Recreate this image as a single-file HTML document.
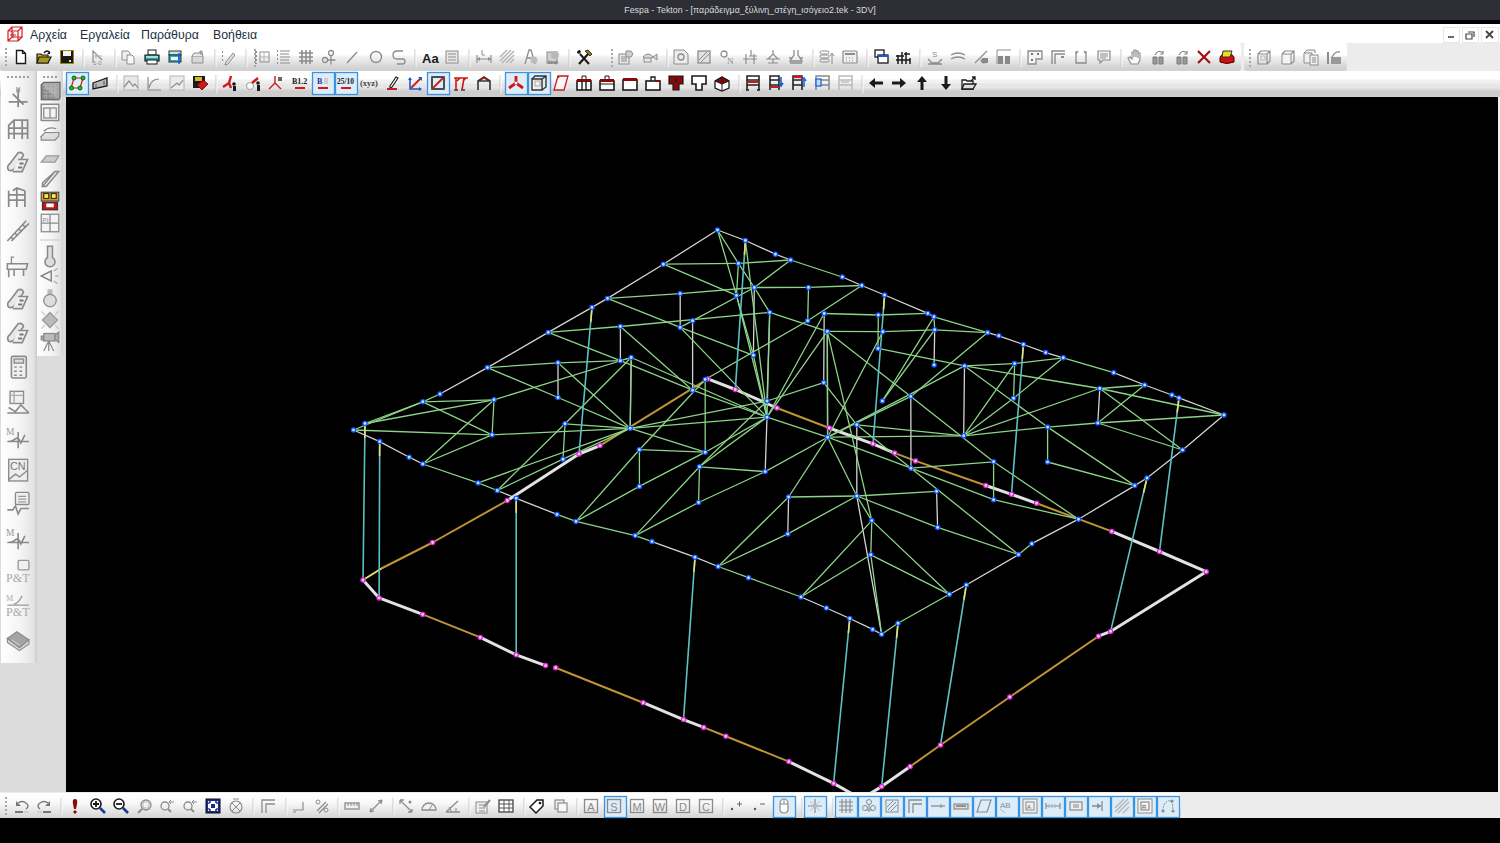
<!DOCTYPE html>
<html><head><meta charset="utf-8">
<style>
*{margin:0;padding:0;box-sizing:border-box}
html,body{width:1500px;height:843px;overflow:hidden;background:#000;font-family:"Liberation Sans",sans-serif}
.abs{position:absolute}
#title{left:0;top:0;width:1500px;height:20px;background:#2d2e36;color:#dcdcdc;font-size:8.75px;text-align:center;line-height:20px;letter-spacing:0.05px}
#blk{left:0;top:20px;width:1500px;height:4px;background:#000}
#menu{left:0;top:24px;width:1500px;height:19px;background:#fff}
#menu span{position:absolute;top:3.5px;font-size:12.3px;color:#22303e}
#r1bg{left:0;top:43px;width:1500px;height:28px;background:#ececec}
.grp{position:absolute;top:43px;height:28px;background:linear-gradient(#ffffff 0px,#ffffff 12px,#f4f4f4 13px,#eaeaea 17px,#dedede 21px,#d2d2d2 25px,#d0d0d0 28px);border-radius:3px}
#r2{left:0;top:71px;width:1500px;height:26px;background:linear-gradient(#ffffff 0px,#ffffff 8px,#f2f2f2 9px,#f0f0f0 12px,#e6e6e6 13px,#e6e6e6 17px,#dcdcdc 18px,#d8d8d8 19px,#cdcdcd 20px,#cdcdcd 25px,#d6d6d6 26px)}
#left{left:0;top:97px;width:66px;height:696px;background:#dcdcdc}
#col1{left:1px;top:71px;width:36px;height:592px;background:linear-gradient(90deg,#ffffff 0%,#f4f4f4 55%,#e2e2e2 92%,#c8c8c8 100%)}
#col2{left:37px;top:71px;width:26px;height:285px;background:linear-gradient(90deg,#ffffff 0%,#f4f4f4 55%,#e2e2e2 90%,#d0d0d0 100%)}
#canvas{left:66px;top:97px;width:1432px;height:696px;background:#000}
#rstrip{left:1498px;top:97px;width:2px;height:696px;background:#f0f0f0}
#botbg{left:0;top:792px;width:1500px;height:26px;background:#ececec}
#bot{left:0;top:793px;width:1181px;height:25px;background:linear-gradient(#ffffff 0%,#f8f8f8 40%,#e4e4e4 75%,#d4d4d4 100%);border-radius:0 4px 4px 0}
#botblk{left:0;top:818px;width:1500px;height:25px;background:#000}
</style></head><body>
<div id="title" class="abs">Fespa - Tekton - [παράδειγμα_ξύλινη_στέγη_ισόγειο2.tek - 3DV]</div>
<div id="blk" class="abs"></div>
<div id="menu" class="abs">
<span style="left:30px">Αρχεία</span>
<span style="left:80px">Εργαλεία</span>
<span style="left:141px">Παράθυρα</span>
<span style="left:213px">Βοήθεια</span>
</div>
<div id="r1bg" class="abs"></div>
<div class="grp" style="left:0;width:1241px"></div>
<div class="grp" style="left:1244px;width:103px"></div>
<div id="r2" class="abs"></div>
<div id="left" class="abs"></div>
<div id="col1" class="abs"></div>
<div id="col2" class="abs"></div>
<div id="canvas" class="abs"></div>
<div id="rstrip" class="abs"></div>
<svg class="abs" style="left:0;top:0" width="1500" height="843" viewBox="0 0 1500 843"><defs><clipPath id="cv"><rect x="66" y="97" width="1432" height="696"/></clipPath></defs><g clip-path="url(#cv)" stroke-linecap="round"><line x1="353.5" y1="430" x2="422.8" y2="401.8" stroke="#8cd488" stroke-width="1.3"/><line x1="365" y1="423.5" x2="422.8" y2="401.8" stroke="#8cd488" stroke-width="1.3"/><line x1="422.8" y1="401.8" x2="440" y2="394" stroke="#8cd488" stroke-width="1.3"/><line x1="440" y1="394" x2="487.4" y2="367.6" stroke="#d4d4d4" stroke-width="1.3"/><line x1="487.4" y1="367.6" x2="548.2" y2="332.4" stroke="#d4d4d4" stroke-width="1.3"/><line x1="548.2" y1="332.4" x2="592" y2="307.4" stroke="#d4d4d4" stroke-width="1.3"/><line x1="592" y1="307.4" x2="607.5" y2="298.4" stroke="#d4d4d4" stroke-width="1.3"/><line x1="607.5" y1="298.4" x2="663.4" y2="264.2" stroke="#d4d4d4" stroke-width="1.3"/><line x1="663.4" y1="264.2" x2="717.5" y2="230" stroke="#d4d4d4" stroke-width="1.3"/><line x1="717.5" y1="230" x2="745.4" y2="240.5" stroke="#d4d4d4" stroke-width="1.3"/><line x1="745.4" y1="240.5" x2="775.4" y2="254.2" stroke="#d4d4d4" stroke-width="1.3"/><line x1="775.4" y1="254.2" x2="790.6" y2="260" stroke="#d4d4d4" stroke-width="1.3"/><line x1="790.6" y1="260" x2="842.3" y2="277" stroke="#8cd488" stroke-width="1.3"/><line x1="842.3" y1="277" x2="861.8" y2="285.5" stroke="#d4d4d4" stroke-width="1.3"/><line x1="861.8" y1="285.5" x2="884.6" y2="295" stroke="#d4d4d4" stroke-width="1.3"/><line x1="884.6" y1="295" x2="927.8" y2="313.4" stroke="#d4d4d4" stroke-width="1.3"/><line x1="934" y1="316.8" x2="987.6" y2="332.6" stroke="#8cd488" stroke-width="1.3"/><line x1="927.8" y1="313.4" x2="934" y2="316.8" stroke="#d4d4d4" stroke-width="1.3"/><line x1="987.6" y1="332.6" x2="998.8" y2="335.8" stroke="#d4d4d4" stroke-width="1.3"/><line x1="998.8" y1="335.8" x2="1023.4" y2="344.5" stroke="#d4d4d4" stroke-width="1.3"/><line x1="1023.4" y1="344.5" x2="1045.7" y2="352.6" stroke="#d4d4d4" stroke-width="1.3"/><line x1="1045.7" y1="352.6" x2="1063.3" y2="357.8" stroke="#d4d4d4" stroke-width="1.3"/><line x1="1063.3" y1="357.8" x2="1113.7" y2="372.7" stroke="#8cd488" stroke-width="1.3"/><line x1="1113.7" y1="372.7" x2="1144.7" y2="385" stroke="#d4d4d4" stroke-width="1.3"/><line x1="1144.7" y1="385" x2="1171.9" y2="395" stroke="#d4d4d4" stroke-width="1.3"/><line x1="1171.9" y1="395" x2="1179" y2="397.9" stroke="#d4d4d4" stroke-width="1.3"/><line x1="1179" y1="397.9" x2="1224" y2="415" stroke="#d4d4d4" stroke-width="1.3"/><line x1="1224" y1="415" x2="1182.6" y2="450" stroke="#d4d4d4" stroke-width="1.3"/><line x1="1182.6" y1="450" x2="1147" y2="478" stroke="#d4d4d4" stroke-width="1.3"/><line x1="1147" y1="478" x2="1134.7" y2="485.6" stroke="#d4d4d4" stroke-width="1.3"/><line x1="1134.7" y1="485.6" x2="1078.5" y2="519.2" stroke="#d4d4d4" stroke-width="1.3"/><line x1="1078.5" y1="519.2" x2="1031.8" y2="543.7" stroke="#d4d4d4" stroke-width="1.3"/><line x1="1031.8" y1="543.7" x2="1018.5" y2="554.6" stroke="#8cd488" stroke-width="1.3"/><line x1="1018.5" y1="554.6" x2="966.3" y2="585" stroke="#d4d4d4" stroke-width="1.3"/><line x1="966.3" y1="585" x2="949.4" y2="594.3" stroke="#d4d4d4" stroke-width="1.3"/><line x1="949.4" y1="594.3" x2="898" y2="623.3" stroke="#8cd488" stroke-width="1.3"/><line x1="898" y1="623.3" x2="881.6" y2="634.2" stroke="#8cd488" stroke-width="1.3"/><line x1="881.6" y1="634.2" x2="872.7" y2="629.4" stroke="#d4d4d4" stroke-width="1.3"/><line x1="872.7" y1="629.4" x2="849.8" y2="618.5" stroke="#d4d4d4" stroke-width="1.3"/><line x1="849.8" y1="618.5" x2="826.4" y2="608" stroke="#d4d4d4" stroke-width="1.3"/><line x1="826.4" y1="608" x2="801" y2="597" stroke="#d4d4d4" stroke-width="1.3"/><line x1="801" y1="597" x2="748.5" y2="577.7" stroke="#8cd488" stroke-width="1.3"/><line x1="748.5" y1="577.7" x2="718.2" y2="566.5" stroke="#8cd488" stroke-width="1.3"/><line x1="718.2" y1="566.5" x2="695" y2="557.2" stroke="#d4d4d4" stroke-width="1.3"/><line x1="695" y1="557.2" x2="652" y2="541.6" stroke="#d4d4d4" stroke-width="1.3"/><line x1="652" y1="541.6" x2="635.3" y2="535.6" stroke="#8cd488" stroke-width="1.3"/><line x1="635.3" y1="535.6" x2="576" y2="521.4" stroke="#8cd488" stroke-width="1.3"/><line x1="576" y1="521.4" x2="557" y2="514.4" stroke="#8cd488" stroke-width="1.3"/><line x1="557" y1="514.4" x2="516.2" y2="498.3" stroke="#d4d4d4" stroke-width="1.3"/><line x1="516.2" y1="498.3" x2="497.3" y2="490.5" stroke="#d4d4d4" stroke-width="1.3"/><line x1="497.3" y1="490.5" x2="478.1" y2="482.9" stroke="#8cd488" stroke-width="1.3"/><line x1="478.1" y1="482.9" x2="422.8" y2="464" stroke="#8cd488" stroke-width="1.3"/><line x1="422.8" y1="464" x2="409.2" y2="457.2" stroke="#d4d4d4" stroke-width="1.3"/><line x1="409.2" y1="457.2" x2="379.7" y2="441.6" stroke="#d4d4d4" stroke-width="1.3"/><line x1="379.7" y1="441.6" x2="353.5" y2="430" stroke="#d4d4d4" stroke-width="1.3"/><line x1="363" y1="580" x2="382.3" y2="568" stroke="#e8e070" stroke-width="2"/><line x1="382.3" y1="568" x2="432.6" y2="542.5" stroke="#c09432" stroke-width="2"/><line x1="432.6" y1="542.5" x2="507.3" y2="500.5" stroke="#c09432" stroke-width="2"/><line x1="507.3" y1="500.5" x2="579" y2="454" stroke="#e2e2e2" stroke-width="3"/><line x1="579" y1="454" x2="600" y2="445.6" stroke="#e2e2e2" stroke-width="3"/><line x1="600" y1="445.6" x2="707.8" y2="378.9" stroke="#c09432" stroke-width="2"/><line x1="707.8" y1="378.9" x2="735.3" y2="389.5" stroke="#e2e2e2" stroke-width="3"/><line x1="735.3" y1="389.5" x2="777" y2="408" stroke="#e2e2e2" stroke-width="3"/><line x1="777" y1="408" x2="829.2" y2="428" stroke="#c09432" stroke-width="2"/><line x1="829.2" y1="428" x2="873" y2="443.8" stroke="#e2e2e2" stroke-width="3"/><line x1="873" y1="443.8" x2="894.7" y2="453.1" stroke="#e2e2e2" stroke-width="3"/><line x1="894.7" y1="453.1" x2="915.6" y2="460.9" stroke="#c09432" stroke-width="2"/><line x1="915.6" y1="460.9" x2="985.8" y2="485.5" stroke="#c09432" stroke-width="2"/><line x1="985.8" y1="485.5" x2="1011.5" y2="494.3" stroke="#e2e2e2" stroke-width="3"/><line x1="1011.5" y1="494.3" x2="1036.6" y2="503.3" stroke="#e2e2e2" stroke-width="3"/><line x1="1036.6" y1="503.3" x2="1111.7" y2="531.4" stroke="#c09432" stroke-width="2"/><line x1="1111.7" y1="531.4" x2="1159.5" y2="551.5" stroke="#e2e2e2" stroke-width="3"/><line x1="1159.5" y1="551.5" x2="1206.2" y2="571.7" stroke="#e2e2e2" stroke-width="3"/><line x1="1206.2" y1="571.7" x2="1110.6" y2="631.4" stroke="#e2e2e2" stroke-width="3"/><line x1="1110.6" y1="631.4" x2="1098.5" y2="636.2" stroke="#e2e2e2" stroke-width="3"/><line x1="1098.5" y1="636.2" x2="1009.8" y2="697" stroke="#c09432" stroke-width="2"/><line x1="1009.8" y1="697" x2="940.5" y2="745" stroke="#c09432" stroke-width="2"/><line x1="940.5" y1="745" x2="910.2" y2="766.5" stroke="#c09432" stroke-width="2"/><line x1="910.2" y1="766.5" x2="881.6" y2="786.6" stroke="#e2e2e2" stroke-width="3"/><line x1="363" y1="580" x2="379.1" y2="597.9" stroke="#e2e2e2" stroke-width="3"/><line x1="379.1" y1="597.9" x2="422.7" y2="614.4" stroke="#e2e2e2" stroke-width="3"/><line x1="422.7" y1="614.4" x2="480.3" y2="637.4" stroke="#c09432" stroke-width="2"/><line x1="480.3" y1="637.4" x2="516.2" y2="654.8" stroke="#e2e2e2" stroke-width="3"/><line x1="516.2" y1="654.8" x2="545.6" y2="665.6" stroke="#e2e2e2" stroke-width="3"/><line x1="555.7" y1="667.7" x2="643.2" y2="702.7" stroke="#c09432" stroke-width="2"/><line x1="643.2" y1="702.7" x2="683.5" y2="719.6" stroke="#e2e2e2" stroke-width="3"/><line x1="683.5" y1="719.6" x2="703.7" y2="727.4" stroke="#e2e2e2" stroke-width="3"/><line x1="703.7" y1="727.4" x2="725.9" y2="736.2" stroke="#c09432" stroke-width="2"/><line x1="725.9" y1="736.2" x2="788.8" y2="761.6" stroke="#c09432" stroke-width="2"/><line x1="788.8" y1="761.6" x2="833.6" y2="783.4" stroke="#e2e2e2" stroke-width="3"/><line x1="558" y1="362.8" x2="558" y2="397.5" stroke="#d4d4d4" stroke-width="1.3"/><line x1="494" y1="399.8" x2="492.1" y2="434.8" stroke="#8cd488" stroke-width="1.3"/><line x1="565" y1="423.8" x2="563" y2="459.2" stroke="#8cd488" stroke-width="1.3"/><line x1="620.4" y1="326.5" x2="620.4" y2="360.7" stroke="#d4d4d4" stroke-width="1.3"/><line x1="631.2" y1="357.5" x2="630.2" y2="428.3" stroke="#d4d4d4" stroke-width="1.3"/><line x1="639.4" y1="449.7" x2="639.4" y2="486.4" stroke="#8cd488" stroke-width="1.3"/><line x1="680.2" y1="293.6" x2="680.2" y2="327.4" stroke="#d4d4d4" stroke-width="1.3"/><line x1="692.6" y1="320.8" x2="692.6" y2="390.2" stroke="#d4d4d4" stroke-width="1.3"/><line x1="705.2" y1="379.5" x2="705.2" y2="452.2" stroke="#8cd488" stroke-width="1.3"/><line x1="699.5" y1="466.8" x2="698.6" y2="502.5" stroke="#8cd488" stroke-width="1.3"/><line x1="738.4" y1="263.4" x2="736.5" y2="295.4" stroke="#8cd488" stroke-width="1.3"/><line x1="754.3" y1="287.5" x2="753.4" y2="355.3" stroke="#d4d4d4" stroke-width="1.3"/><line x1="769.7" y1="312.4" x2="767" y2="401" stroke="#d4d4d4" stroke-width="1.3"/><line x1="767" y1="417.2" x2="765.2" y2="471.6" stroke="#d4d4d4" stroke-width="1.3"/><line x1="808.5" y1="287.4" x2="807.7" y2="320.7" stroke="#8cd488" stroke-width="1.3"/><line x1="824.2" y1="313.5" x2="823.7" y2="382.6" stroke="#d4d4d4" stroke-width="1.3"/><line x1="827.3" y1="331.4" x2="827.6" y2="437.2" stroke="#d4d4d4" stroke-width="1.3"/><line x1="878.3" y1="315" x2="878" y2="348.4" stroke="#8cd488" stroke-width="1.3"/><line x1="934.7" y1="329.8" x2="934.1" y2="364.9" stroke="#d4d4d4" stroke-width="1.3"/><line x1="964.5" y1="365.9" x2="963.7" y2="435.8" stroke="#d4d4d4" stroke-width="1.3"/><line x1="1014.6" y1="363.6" x2="1013.6" y2="398.2" stroke="#8cd488" stroke-width="1.3"/><line x1="1099.8" y1="388.5" x2="1097.8" y2="423" stroke="#d4d4d4" stroke-width="1.3"/><line x1="1047.6" y1="427.1" x2="1047.6" y2="462" stroke="#8cd488" stroke-width="1.3"/><line x1="856.8" y1="424.8" x2="856.8" y2="496" stroke="#d4d4d4" stroke-width="1.3"/><line x1="910.8" y1="396.4" x2="911" y2="468.2" stroke="#d4d4d4" stroke-width="1.3"/><line x1="993.6" y1="461.8" x2="993.6" y2="499.7" stroke="#8cd488" stroke-width="1.3"/><line x1="788.6" y1="497" x2="787.8" y2="533.9" stroke="#d4d4d4" stroke-width="1.3"/><line x1="871.8" y1="520.6" x2="870.8" y2="554.8" stroke="#8cd488" stroke-width="1.3"/><line x1="936.6" y1="491.3" x2="937.6" y2="527.4" stroke="#d4d4d4" stroke-width="1.3"/><line x1="856.8" y1="496" x2="881.6" y2="634.2" stroke="#d4d4d4" stroke-width="1.3"/><line x1="365" y1="423.5" x2="494" y2="399.8" stroke="#8cd488" stroke-width="1.3"/><line x1="353.5" y1="430" x2="492.1" y2="434.8" stroke="#8cd488" stroke-width="1.3"/><line x1="422.8" y1="401.8" x2="494" y2="399.8" stroke="#8cd488" stroke-width="1.3"/><line x1="422.8" y1="401.8" x2="492.1" y2="434.8" stroke="#8cd488" stroke-width="1.3"/><line x1="492.1" y1="434.8" x2="422.8" y2="464" stroke="#8cd488" stroke-width="1.3"/><line x1="494" y1="399.8" x2="422.8" y2="464" stroke="#8cd488" stroke-width="1.3"/><line x1="487.4" y1="367.6" x2="558" y2="362.8" stroke="#8cd488" stroke-width="1.3"/><line x1="487.4" y1="367.6" x2="558" y2="397.5" stroke="#8cd488" stroke-width="1.3"/><line x1="558" y1="397.5" x2="630.2" y2="428.3" stroke="#8cd488" stroke-width="1.3"/><line x1="548.2" y1="332.4" x2="620.4" y2="326.5" stroke="#8cd488" stroke-width="1.3"/><line x1="548.2" y1="332.4" x2="620.4" y2="360.7" stroke="#8cd488" stroke-width="1.3"/><line x1="620.4" y1="326.5" x2="769.7" y2="312.4" stroke="#8cd488" stroke-width="1.3"/><line x1="607.5" y1="298.4" x2="680.2" y2="293.6" stroke="#8cd488" stroke-width="1.3"/><line x1="680.2" y1="293.6" x2="754.3" y2="287.5" stroke="#8cd488" stroke-width="1.3"/><line x1="754.3" y1="287.5" x2="808.5" y2="287.4" stroke="#8cd488" stroke-width="1.3"/><line x1="808.5" y1="287.4" x2="861.8" y2="285.5" stroke="#8cd488" stroke-width="1.3"/><line x1="607.5" y1="298.4" x2="680.2" y2="327.4" stroke="#8cd488" stroke-width="1.3"/><line x1="680.2" y1="327.4" x2="753.4" y2="355.3" stroke="#8cd488" stroke-width="1.3"/><line x1="663.4" y1="264.2" x2="738.4" y2="263.4" stroke="#8cd488" stroke-width="1.3"/><line x1="738.4" y1="263.4" x2="790.6" y2="260" stroke="#8cd488" stroke-width="1.3"/><line x1="663.4" y1="264.2" x2="736.5" y2="295.4" stroke="#8cd488" stroke-width="1.3"/><line x1="717.5" y1="230" x2="738.4" y2="263.4" stroke="#8cd488" stroke-width="1.3"/><line x1="738.4" y1="263.4" x2="754.3" y2="287.5" stroke="#8cd488" stroke-width="1.3"/><line x1="754.3" y1="287.5" x2="769.7" y2="312.4" stroke="#8cd488" stroke-width="1.3"/><line x1="717.5" y1="230" x2="736.5" y2="295.4" stroke="#8cd488" stroke-width="1.3"/><line x1="736.5" y1="295.4" x2="753.4" y2="355.3" stroke="#8cd488" stroke-width="1.3"/><line x1="753.4" y1="355.3" x2="767" y2="417.2" stroke="#8cd488" stroke-width="1.3"/><line x1="769.7" y1="312.4" x2="767" y2="417.2" stroke="#8cd488" stroke-width="1.3"/><line x1="745.4" y1="240.5" x2="767" y2="417.2" stroke="#8cd488" stroke-width="1.3"/><line x1="790.6" y1="260" x2="754.3" y2="287.5" stroke="#8cd488" stroke-width="1.3"/><line x1="631.2" y1="357.5" x2="630.2" y2="428.3" stroke="#8cd488" stroke-width="1.3"/><line x1="630.2" y1="428.3" x2="767" y2="417.2" stroke="#8cd488" stroke-width="1.3"/><line x1="630.2" y1="428.3" x2="478.1" y2="482.9" stroke="#8cd488" stroke-width="1.3"/><line x1="565" y1="423.8" x2="630.2" y2="428.3" stroke="#8cd488" stroke-width="1.3"/><line x1="563" y1="459.2" x2="630.2" y2="428.3" stroke="#8cd488" stroke-width="1.3"/><line x1="639.4" y1="486.4" x2="705.2" y2="452.2" stroke="#8cd488" stroke-width="1.3"/><line x1="639.4" y1="449.7" x2="576" y2="521.4" stroke="#8cd488" stroke-width="1.3"/><line x1="639.4" y1="486.4" x2="576" y2="521.4" stroke="#8cd488" stroke-width="1.3"/><line x1="639.4" y1="449.7" x2="705.2" y2="452.2" stroke="#8cd488" stroke-width="1.3"/><line x1="699.5" y1="466.8" x2="765.2" y2="471.6" stroke="#8cd488" stroke-width="1.3"/><line x1="699.5" y1="466.8" x2="635.3" y2="535.6" stroke="#8cd488" stroke-width="1.3"/><line x1="698.6" y1="502.5" x2="635.3" y2="535.6" stroke="#8cd488" stroke-width="1.3"/><line x1="699.5" y1="466.8" x2="767" y2="401" stroke="#8cd488" stroke-width="1.3"/><line x1="698.6" y1="502.5" x2="765.2" y2="471.6" stroke="#8cd488" stroke-width="1.3"/><line x1="765.2" y1="471.6" x2="827.6" y2="437.2" stroke="#8cd488" stroke-width="1.3"/><line x1="705.2" y1="452.2" x2="767" y2="417.2" stroke="#8cd488" stroke-width="1.3"/><line x1="767" y1="417.2" x2="827.6" y2="437.2" stroke="#8cd488" stroke-width="1.3"/><line x1="767" y1="417.2" x2="699.5" y2="466.8" stroke="#8cd488" stroke-width="1.3"/><line x1="767" y1="401" x2="823.7" y2="382.6" stroke="#8cd488" stroke-width="1.3"/><line x1="680.2" y1="327.4" x2="767" y2="417.2" stroke="#8cd488" stroke-width="1.3"/><line x1="736.5" y1="295.4" x2="767" y2="417.2" stroke="#8cd488" stroke-width="1.3"/><line x1="827.3" y1="331.4" x2="882.8" y2="331.7" stroke="#8cd488" stroke-width="1.3"/><line x1="824.2" y1="313.5" x2="878.3" y2="315" stroke="#8cd488" stroke-width="1.3"/><line x1="827.3" y1="331.4" x2="827.6" y2="437.2" stroke="#8cd488" stroke-width="1.3"/><line x1="882.8" y1="331.7" x2="827.6" y2="437.2" stroke="#8cd488" stroke-width="1.3"/><line x1="827.6" y1="437.2" x2="963.7" y2="435.8" stroke="#8cd488" stroke-width="1.3"/><line x1="827.6" y1="437.2" x2="788.6" y2="497" stroke="#8cd488" stroke-width="1.3"/><line x1="827.6" y1="437.2" x2="856.8" y2="496" stroke="#8cd488" stroke-width="1.3"/><line x1="856.8" y1="496" x2="871.8" y2="520.6" stroke="#8cd488" stroke-width="1.3"/><line x1="827.6" y1="437.2" x2="911" y2="468.2" stroke="#8cd488" stroke-width="1.3"/><line x1="911" y1="468.2" x2="993.6" y2="499.7" stroke="#8cd488" stroke-width="1.3"/><line x1="993.6" y1="499.7" x2="1078.5" y2="519.2" stroke="#8cd488" stroke-width="1.3"/><line x1="856.8" y1="424.8" x2="1018.5" y2="554.6" stroke="#8cd488" stroke-width="1.3"/><line x1="788.6" y1="497" x2="856.8" y2="496" stroke="#8cd488" stroke-width="1.3"/><line x1="856.8" y1="496" x2="936.6" y2="491.3" stroke="#8cd488" stroke-width="1.3"/><line x1="787.8" y1="533.9" x2="856.8" y2="496" stroke="#8cd488" stroke-width="1.3"/><line x1="856.8" y1="496" x2="937.6" y2="527.4" stroke="#8cd488" stroke-width="1.3"/><line x1="937.6" y1="527.4" x2="1018.5" y2="554.6" stroke="#8cd488" stroke-width="1.3"/><line x1="871.8" y1="520.6" x2="801" y2="597" stroke="#8cd488" stroke-width="1.3"/><line x1="870.8" y1="554.8" x2="801" y2="597" stroke="#8cd488" stroke-width="1.3"/><line x1="870.8" y1="554.8" x2="949.4" y2="594.3" stroke="#8cd488" stroke-width="1.3"/><line x1="871.8" y1="520.6" x2="949.4" y2="594.3" stroke="#8cd488" stroke-width="1.3"/><line x1="827.3" y1="331.4" x2="871.8" y2="520.6" stroke="#8cd488" stroke-width="1.3"/><line x1="870.8" y1="554.8" x2="881.6" y2="634.2" stroke="#8cd488" stroke-width="1.3"/><line x1="718.2" y1="566.5" x2="787.8" y2="533.9" stroke="#8cd488" stroke-width="1.3"/><line x1="718.2" y1="566.5" x2="788.6" y2="497" stroke="#8cd488" stroke-width="1.3"/><line x1="934" y1="316.8" x2="882.3" y2="401" stroke="#8cd488" stroke-width="1.3"/><line x1="934.7" y1="329.8" x2="882.3" y2="401" stroke="#8cd488" stroke-width="1.3"/><line x1="987.6" y1="332.6" x2="910.8" y2="396.4" stroke="#8cd488" stroke-width="1.3"/><line x1="910.8" y1="396.4" x2="827.6" y2="437.2" stroke="#8cd488" stroke-width="1.3"/><line x1="934.7" y1="329.8" x2="934" y2="316.8" stroke="#8cd488" stroke-width="1.3"/><line x1="882.8" y1="331.7" x2="934.7" y2="329.8" stroke="#8cd488" stroke-width="1.3"/><line x1="934.7" y1="329.8" x2="987.6" y2="332.6" stroke="#8cd488" stroke-width="1.3"/><line x1="878" y1="348.4" x2="964.5" y2="365.9" stroke="#8cd488" stroke-width="1.3"/><line x1="964.5" y1="365.9" x2="1099.8" y2="388.5" stroke="#8cd488" stroke-width="1.3"/><line x1="1099.8" y1="388.5" x2="1224" y2="415" stroke="#8cd488" stroke-width="1.3"/><line x1="964.5" y1="365.9" x2="1014.6" y2="363.6" stroke="#8cd488" stroke-width="1.3"/><line x1="1014.6" y1="363.6" x2="1063.3" y2="357.8" stroke="#8cd488" stroke-width="1.3"/><line x1="964.5" y1="365.9" x2="1047.6" y2="427.1" stroke="#8cd488" stroke-width="1.3"/><line x1="1014.6" y1="363.6" x2="963.7" y2="435.8" stroke="#8cd488" stroke-width="1.3"/><line x1="1063.3" y1="357.8" x2="1013.6" y2="398.2" stroke="#8cd488" stroke-width="1.3"/><line x1="1013.6" y1="398.2" x2="963.7" y2="435.8" stroke="#8cd488" stroke-width="1.3"/><line x1="1099.8" y1="388.5" x2="1144.7" y2="385" stroke="#8cd488" stroke-width="1.3"/><line x1="1099.8" y1="388.5" x2="1182.6" y2="450" stroke="#8cd488" stroke-width="1.3"/><line x1="1144.7" y1="385" x2="1097.8" y2="423" stroke="#8cd488" stroke-width="1.3"/><line x1="1097.8" y1="423" x2="1224" y2="415" stroke="#8cd488" stroke-width="1.3"/><line x1="1097.8" y1="423" x2="1182.6" y2="450" stroke="#8cd488" stroke-width="1.3"/><line x1="1097.8" y1="423" x2="1047.6" y2="427.1" stroke="#8cd488" stroke-width="1.3"/><line x1="1047.6" y1="427.1" x2="1134.7" y2="485.6" stroke="#8cd488" stroke-width="1.3"/><line x1="1047.6" y1="462" x2="1134.7" y2="485.6" stroke="#8cd488" stroke-width="1.3"/><line x1="963.7" y1="435.8" x2="1047.6" y2="427.1" stroke="#8cd488" stroke-width="1.3"/><line x1="993.6" y1="461.8" x2="1078.5" y2="519.2" stroke="#8cd488" stroke-width="1.3"/><line x1="911" y1="468.2" x2="993.6" y2="461.8" stroke="#8cd488" stroke-width="1.3"/><line x1="910.8" y1="396.4" x2="993.6" y2="461.8" stroke="#8cd488" stroke-width="1.3"/><line x1="823.7" y1="382.6" x2="856.8" y2="424.8" stroke="#8cd488" stroke-width="1.3"/><line x1="856.8" y1="424.8" x2="963.7" y2="435.8" stroke="#8cd488" stroke-width="1.3"/><line x1="705.2" y1="452.2" x2="630.2" y2="428.3" stroke="#8cd488" stroke-width="1.3"/><line x1="767" y1="401" x2="630.2" y2="428.3" stroke="#8cd488" stroke-width="1.3"/><line x1="494" y1="399.8" x2="631.2" y2="357.5" stroke="#8cd488" stroke-width="1.3"/><line x1="497.3" y1="490.5" x2="565" y2="423.8" stroke="#8cd488" stroke-width="1.3"/><line x1="565" y1="423.8" x2="631.2" y2="357.5" stroke="#8cd488" stroke-width="1.3"/><line x1="497.3" y1="490.5" x2="563" y2="459.2" stroke="#8cd488" stroke-width="1.3"/><line x1="558" y1="362.8" x2="630.2" y2="428.3" stroke="#8cd488" stroke-width="1.3"/><line x1="558" y1="362.8" x2="620.4" y2="360.7" stroke="#8cd488" stroke-width="1.3"/><line x1="620.4" y1="360.7" x2="631.2" y2="357.5" stroke="#8cd488" stroke-width="1.3"/><line x1="639.4" y1="449.7" x2="705.2" y2="379.5" stroke="#8cd488" stroke-width="1.3"/><line x1="620.4" y1="326.5" x2="692.6" y2="390.2" stroke="#8cd488" stroke-width="1.3"/><line x1="692.6" y1="390.2" x2="767" y2="417.2" stroke="#8cd488" stroke-width="1.3"/><line x1="620.4" y1="360.7" x2="692.6" y2="390.2" stroke="#8cd488" stroke-width="1.3"/><line x1="631.2" y1="357.5" x2="767" y2="417.2" stroke="#8cd488" stroke-width="1.3"/><line x1="492.1" y1="434.8" x2="630.2" y2="428.3" stroke="#8cd488" stroke-width="1.3"/><line x1="754.3" y1="287.5" x2="680.2" y2="327.4" stroke="#8cd488" stroke-width="1.3"/><line x1="878.3" y1="315" x2="927.8" y2="313.4" stroke="#8cd488" stroke-width="1.3"/><line x1="964.5" y1="365.9" x2="827.6" y2="437.2" stroke="#8cd488" stroke-width="1.3"/><line x1="827.3" y1="331.4" x2="910.8" y2="396.4" stroke="#8cd488" stroke-width="1.3"/><line x1="963.7" y1="435.8" x2="1099.8" y2="388.5" stroke="#8cd488" stroke-width="1.3"/><line x1="861.8" y1="285.5" x2="807.7" y2="320.7" stroke="#8cd488" stroke-width="1.3"/><line x1="807.7" y1="320.7" x2="705.2" y2="379.5" stroke="#8cd488" stroke-width="1.3"/><line x1="769.7" y1="312.4" x2="827.3" y2="331.4" stroke="#8cd488" stroke-width="1.3"/><line x1="824.2" y1="313.5" x2="767" y2="417.2" stroke="#8cd488" stroke-width="1.3"/><line x1="827.3" y1="331.4" x2="767" y2="417.2" stroke="#8cd488" stroke-width="1.3"/><line x1="881.6" y1="786.6" x2="866" y2="796" stroke="#e2e2e2" stroke-width="3"/><line x1="833.6" y1="783.4" x2="856" y2="796" stroke="#e2e2e2" stroke-width="3"/><line x1="365" y1="423.5" x2="363" y2="580" stroke="#5cc0c4" stroke-width="1.6"/><line x1="365" y1="423.5" x2="364.8" y2="437.5" stroke="#e8e070" stroke-width="1.6"/><line x1="379.7" y1="441.6" x2="379.1" y2="597.9" stroke="#5cc0c4" stroke-width="1.6"/><line x1="379.7" y1="441.6" x2="379.6" y2="455.6" stroke="#e8e070" stroke-width="1.6"/><line x1="592" y1="307.4" x2="579" y2="454" stroke="#5cc0c4" stroke-width="1.6"/><line x1="592" y1="307.4" x2="590.8" y2="321.4" stroke="#e8e070" stroke-width="1.6"/><line x1="745.4" y1="240.5" x2="735.3" y2="389.5" stroke="#5cc0c4" stroke-width="1.6"/><line x1="745.4" y1="240.5" x2="744.5" y2="254.5" stroke="#e8e070" stroke-width="1.6"/><line x1="516.2" y1="498.3" x2="516.2" y2="654.8" stroke="#5cc0c4" stroke-width="1.6"/><line x1="516.2" y1="498.3" x2="516.2" y2="512.3" stroke="#e8e070" stroke-width="1.6"/><line x1="884.6" y1="295" x2="873" y2="443.8" stroke="#5cc0c4" stroke-width="1.6"/><line x1="884.6" y1="295" x2="883.5" y2="309" stroke="#e8e070" stroke-width="1.6"/><line x1="1023.4" y1="344.5" x2="1011.5" y2="494.3" stroke="#5cc0c4" stroke-width="1.6"/><line x1="1023.4" y1="344.5" x2="1022.3" y2="358.5" stroke="#e8e070" stroke-width="1.6"/><line x1="1179" y1="397.9" x2="1159.5" y2="551.5" stroke="#5cc0c4" stroke-width="1.6"/><line x1="1179" y1="397.9" x2="1177.2" y2="411.9" stroke="#e8e070" stroke-width="1.6"/><line x1="695" y1="557.2" x2="683.5" y2="719.6" stroke="#5cc0c4" stroke-width="1.6"/><line x1="695" y1="557.2" x2="694" y2="571.2" stroke="#e8e070" stroke-width="1.6"/><line x1="849.8" y1="618.5" x2="833.6" y2="783.4" stroke="#5cc0c4" stroke-width="1.6"/><line x1="849.8" y1="618.5" x2="848.4" y2="632.5" stroke="#e8e070" stroke-width="1.6"/><line x1="898" y1="623.3" x2="881.6" y2="786.6" stroke="#5cc0c4" stroke-width="1.6"/><line x1="898" y1="623.3" x2="896.6" y2="637.3" stroke="#e8e070" stroke-width="1.6"/><line x1="966.3" y1="585" x2="940.5" y2="745" stroke="#5cc0c4" stroke-width="1.6"/><line x1="966.3" y1="585" x2="964" y2="599" stroke="#e8e070" stroke-width="1.6"/><line x1="1147" y1="478" x2="1110.6" y2="631.4" stroke="#5cc0c4" stroke-width="1.6"/><line x1="1147" y1="478" x2="1143.7" y2="492" stroke="#e8e070" stroke-width="1.6"/><circle cx="353.5" cy="430" r="2.1" fill="#a0f0ff" stroke="#1e4cff" stroke-width="1.3"/><circle cx="365" cy="423.5" r="2.1" fill="#a0f0ff" stroke="#1e4cff" stroke-width="1.3"/><circle cx="422.8" cy="401.8" r="2.1" fill="#a0f0ff" stroke="#1e4cff" stroke-width="1.3"/><circle cx="440" cy="394" r="2.1" fill="#a0f0ff" stroke="#1e4cff" stroke-width="1.3"/><circle cx="487.4" cy="367.6" r="2.1" fill="#a0f0ff" stroke="#1e4cff" stroke-width="1.3"/><circle cx="548.2" cy="332.4" r="2.1" fill="#a0f0ff" stroke="#1e4cff" stroke-width="1.3"/><circle cx="592" cy="307.4" r="2.1" fill="#a0f0ff" stroke="#1e4cff" stroke-width="1.3"/><circle cx="607.5" cy="298.4" r="2.1" fill="#a0f0ff" stroke="#1e4cff" stroke-width="1.3"/><circle cx="663.4" cy="264.2" r="2.1" fill="#a0f0ff" stroke="#1e4cff" stroke-width="1.3"/><circle cx="717.5" cy="230" r="2.1" fill="#a0f0ff" stroke="#1e4cff" stroke-width="1.3"/><circle cx="745.4" cy="240.5" r="2.1" fill="#a0f0ff" stroke="#1e4cff" stroke-width="1.3"/><circle cx="775.4" cy="254.2" r="2.1" fill="#a0f0ff" stroke="#1e4cff" stroke-width="1.3"/><circle cx="790.6" cy="260" r="2.1" fill="#a0f0ff" stroke="#1e4cff" stroke-width="1.3"/><circle cx="842.3" cy="277" r="2.1" fill="#a0f0ff" stroke="#1e4cff" stroke-width="1.3"/><circle cx="861.8" cy="285.5" r="2.1" fill="#a0f0ff" stroke="#1e4cff" stroke-width="1.3"/><circle cx="884.6" cy="295" r="2.1" fill="#a0f0ff" stroke="#1e4cff" stroke-width="1.3"/><circle cx="927.8" cy="313.4" r="2.1" fill="#a0f0ff" stroke="#1e4cff" stroke-width="1.3"/><circle cx="934" cy="316.8" r="2.1" fill="#a0f0ff" stroke="#1e4cff" stroke-width="1.3"/><circle cx="987.6" cy="332.6" r="2.1" fill="#a0f0ff" stroke="#1e4cff" stroke-width="1.3"/><circle cx="998.8" cy="335.8" r="2.1" fill="#a0f0ff" stroke="#1e4cff" stroke-width="1.3"/><circle cx="1023.4" cy="344.5" r="2.1" fill="#a0f0ff" stroke="#1e4cff" stroke-width="1.3"/><circle cx="1045.7" cy="352.6" r="2.1" fill="#a0f0ff" stroke="#1e4cff" stroke-width="1.3"/><circle cx="1063.3" cy="357.8" r="2.1" fill="#a0f0ff" stroke="#1e4cff" stroke-width="1.3"/><circle cx="1113.7" cy="372.7" r="2.1" fill="#a0f0ff" stroke="#1e4cff" stroke-width="1.3"/><circle cx="1144.7" cy="385" r="2.1" fill="#a0f0ff" stroke="#1e4cff" stroke-width="1.3"/><circle cx="1171.9" cy="395" r="2.1" fill="#a0f0ff" stroke="#1e4cff" stroke-width="1.3"/><circle cx="1179" cy="397.9" r="2.1" fill="#a0f0ff" stroke="#1e4cff" stroke-width="1.3"/><circle cx="1224" cy="415" r="2.1" fill="#a0f0ff" stroke="#1e4cff" stroke-width="1.3"/><circle cx="1182.6" cy="450" r="2.1" fill="#a0f0ff" stroke="#1e4cff" stroke-width="1.3"/><circle cx="1147" cy="478" r="2.1" fill="#a0f0ff" stroke="#1e4cff" stroke-width="1.3"/><circle cx="1134.7" cy="485.6" r="2.1" fill="#a0f0ff" stroke="#1e4cff" stroke-width="1.3"/><circle cx="1078.5" cy="519.2" r="2.1" fill="#a0f0ff" stroke="#1e4cff" stroke-width="1.3"/><circle cx="1031.8" cy="543.7" r="2.1" fill="#a0f0ff" stroke="#1e4cff" stroke-width="1.3"/><circle cx="1018.5" cy="554.6" r="2.1" fill="#a0f0ff" stroke="#1e4cff" stroke-width="1.3"/><circle cx="966.3" cy="585" r="2.1" fill="#a0f0ff" stroke="#1e4cff" stroke-width="1.3"/><circle cx="949.4" cy="594.3" r="2.1" fill="#a0f0ff" stroke="#1e4cff" stroke-width="1.3"/><circle cx="898" cy="623.3" r="2.1" fill="#a0f0ff" stroke="#1e4cff" stroke-width="1.3"/><circle cx="881.6" cy="634.2" r="2.1" fill="#a0f0ff" stroke="#1e4cff" stroke-width="1.3"/><circle cx="872.7" cy="629.4" r="2.1" fill="#a0f0ff" stroke="#1e4cff" stroke-width="1.3"/><circle cx="849.8" cy="618.5" r="2.1" fill="#a0f0ff" stroke="#1e4cff" stroke-width="1.3"/><circle cx="826.4" cy="608" r="2.1" fill="#a0f0ff" stroke="#1e4cff" stroke-width="1.3"/><circle cx="801" cy="597" r="2.1" fill="#a0f0ff" stroke="#1e4cff" stroke-width="1.3"/><circle cx="748.5" cy="577.7" r="2.1" fill="#a0f0ff" stroke="#1e4cff" stroke-width="1.3"/><circle cx="718.2" cy="566.5" r="2.1" fill="#a0f0ff" stroke="#1e4cff" stroke-width="1.3"/><circle cx="695" cy="557.2" r="2.1" fill="#a0f0ff" stroke="#1e4cff" stroke-width="1.3"/><circle cx="652" cy="541.6" r="2.1" fill="#a0f0ff" stroke="#1e4cff" stroke-width="1.3"/><circle cx="635.3" cy="535.6" r="2.1" fill="#a0f0ff" stroke="#1e4cff" stroke-width="1.3"/><circle cx="576" cy="521.4" r="2.1" fill="#a0f0ff" stroke="#1e4cff" stroke-width="1.3"/><circle cx="557" cy="514.4" r="2.1" fill="#a0f0ff" stroke="#1e4cff" stroke-width="1.3"/><circle cx="516.2" cy="498.3" r="2.1" fill="#a0f0ff" stroke="#1e4cff" stroke-width="1.3"/><circle cx="497.3" cy="490.5" r="2.1" fill="#a0f0ff" stroke="#1e4cff" stroke-width="1.3"/><circle cx="478.1" cy="482.9" r="2.1" fill="#a0f0ff" stroke="#1e4cff" stroke-width="1.3"/><circle cx="422.8" cy="464" r="2.1" fill="#a0f0ff" stroke="#1e4cff" stroke-width="1.3"/><circle cx="409.2" cy="457.2" r="2.1" fill="#a0f0ff" stroke="#1e4cff" stroke-width="1.3"/><circle cx="379.7" cy="441.6" r="2.1" fill="#a0f0ff" stroke="#1e4cff" stroke-width="1.3"/><circle cx="363" cy="580" r="2.1" fill="#f8c8f8" stroke="#d828d0" stroke-width="1.3"/><circle cx="432.6" cy="542.5" r="2.1" fill="#f8c8f8" stroke="#d828d0" stroke-width="1.3"/><circle cx="507.3" cy="500.5" r="2.1" fill="#f8c8f8" stroke="#d828d0" stroke-width="1.3"/><circle cx="579" cy="454" r="2.1" fill="#f8c8f8" stroke="#d828d0" stroke-width="1.3"/><circle cx="600" cy="445.6" r="2.1" fill="#f8c8f8" stroke="#d828d0" stroke-width="1.3"/><circle cx="707.8" cy="378.9" r="2.1" fill="#f8c8f8" stroke="#d828d0" stroke-width="1.3"/><circle cx="735.3" cy="389.5" r="2.1" fill="#f8c8f8" stroke="#d828d0" stroke-width="1.3"/><circle cx="777" cy="408" r="2.1" fill="#f8c8f8" stroke="#d828d0" stroke-width="1.3"/><circle cx="829.2" cy="428" r="2.1" fill="#f8c8f8" stroke="#d828d0" stroke-width="1.3"/><circle cx="873" cy="443.8" r="2.1" fill="#f8c8f8" stroke="#d828d0" stroke-width="1.3"/><circle cx="894.7" cy="453.1" r="2.1" fill="#f8c8f8" stroke="#d828d0" stroke-width="1.3"/><circle cx="915.6" cy="460.9" r="2.1" fill="#f8c8f8" stroke="#d828d0" stroke-width="1.3"/><circle cx="985.8" cy="485.5" r="2.1" fill="#f8c8f8" stroke="#d828d0" stroke-width="1.3"/><circle cx="1011.5" cy="494.3" r="2.1" fill="#f8c8f8" stroke="#d828d0" stroke-width="1.3"/><circle cx="1036.6" cy="503.3" r="2.1" fill="#f8c8f8" stroke="#d828d0" stroke-width="1.3"/><circle cx="1111.7" cy="531.4" r="2.1" fill="#f8c8f8" stroke="#d828d0" stroke-width="1.3"/><circle cx="1159.5" cy="551.5" r="2.1" fill="#f8c8f8" stroke="#d828d0" stroke-width="1.3"/><circle cx="1206.2" cy="571.7" r="2.1" fill="#f8c8f8" stroke="#d828d0" stroke-width="1.3"/><circle cx="1110.6" cy="631.4" r="2.1" fill="#f8c8f8" stroke="#d828d0" stroke-width="1.3"/><circle cx="1098.5" cy="636.2" r="2.1" fill="#f8c8f8" stroke="#d828d0" stroke-width="1.3"/><circle cx="1009.8" cy="697" r="2.1" fill="#f8c8f8" stroke="#d828d0" stroke-width="1.3"/><circle cx="940.5" cy="745" r="2.1" fill="#f8c8f8" stroke="#d828d0" stroke-width="1.3"/><circle cx="910.2" cy="766.5" r="2.1" fill="#f8c8f8" stroke="#d828d0" stroke-width="1.3"/><circle cx="881.6" cy="786.6" r="2.1" fill="#f8c8f8" stroke="#d828d0" stroke-width="1.3"/><circle cx="379.1" cy="597.9" r="2.1" fill="#f8c8f8" stroke="#d828d0" stroke-width="1.3"/><circle cx="422.7" cy="614.4" r="2.1" fill="#f8c8f8" stroke="#d828d0" stroke-width="1.3"/><circle cx="480.3" cy="637.4" r="2.1" fill="#f8c8f8" stroke="#d828d0" stroke-width="1.3"/><circle cx="516.2" cy="654.8" r="2.1" fill="#f8c8f8" stroke="#d828d0" stroke-width="1.3"/><circle cx="545.6" cy="665.6" r="2.1" fill="#f8c8f8" stroke="#d828d0" stroke-width="1.3"/><circle cx="555.7" cy="667.7" r="2.1" fill="#f8c8f8" stroke="#d828d0" stroke-width="1.3"/><circle cx="643.2" cy="702.7" r="2.1" fill="#f8c8f8" stroke="#d828d0" stroke-width="1.3"/><circle cx="683.5" cy="719.6" r="2.1" fill="#f8c8f8" stroke="#d828d0" stroke-width="1.3"/><circle cx="703.7" cy="727.4" r="2.1" fill="#f8c8f8" stroke="#d828d0" stroke-width="1.3"/><circle cx="725.9" cy="736.2" r="2.1" fill="#f8c8f8" stroke="#d828d0" stroke-width="1.3"/><circle cx="788.8" cy="761.6" r="2.1" fill="#f8c8f8" stroke="#d828d0" stroke-width="1.3"/><circle cx="833.6" cy="783.4" r="2.1" fill="#f8c8f8" stroke="#d828d0" stroke-width="1.3"/><circle cx="558" cy="362.8" r="2.1" fill="#a0f0ff" stroke="#1e4cff" stroke-width="1.3"/><circle cx="558" cy="397.5" r="2.1" fill="#a0f0ff" stroke="#1e4cff" stroke-width="1.3"/><circle cx="494" cy="399.8" r="2.1" fill="#a0f0ff" stroke="#1e4cff" stroke-width="1.3"/><circle cx="492.1" cy="434.8" r="2.1" fill="#a0f0ff" stroke="#1e4cff" stroke-width="1.3"/><circle cx="565" cy="423.8" r="2.1" fill="#a0f0ff" stroke="#1e4cff" stroke-width="1.3"/><circle cx="563" cy="459.2" r="2.1" fill="#a0f0ff" stroke="#1e4cff" stroke-width="1.3"/><circle cx="620.4" cy="326.5" r="2.1" fill="#a0f0ff" stroke="#1e4cff" stroke-width="1.3"/><circle cx="620.4" cy="360.7" r="2.1" fill="#a0f0ff" stroke="#1e4cff" stroke-width="1.3"/><circle cx="631.2" cy="357.5" r="2.1" fill="#a0f0ff" stroke="#1e4cff" stroke-width="1.3"/><circle cx="630.2" cy="428.3" r="2.1" fill="#a0f0ff" stroke="#1e4cff" stroke-width="1.3"/><circle cx="639.4" cy="449.7" r="2.1" fill="#a0f0ff" stroke="#1e4cff" stroke-width="1.3"/><circle cx="639.4" cy="486.4" r="2.1" fill="#a0f0ff" stroke="#1e4cff" stroke-width="1.3"/><circle cx="680.2" cy="293.6" r="2.1" fill="#a0f0ff" stroke="#1e4cff" stroke-width="1.3"/><circle cx="680.2" cy="327.4" r="2.1" fill="#a0f0ff" stroke="#1e4cff" stroke-width="1.3"/><circle cx="692.6" cy="320.8" r="2.1" fill="#a0f0ff" stroke="#1e4cff" stroke-width="1.3"/><circle cx="692.6" cy="390.2" r="2.1" fill="#a0f0ff" stroke="#1e4cff" stroke-width="1.3"/><circle cx="705.2" cy="379.5" r="2.1" fill="#a0f0ff" stroke="#1e4cff" stroke-width="1.3"/><circle cx="705.2" cy="452.2" r="2.1" fill="#a0f0ff" stroke="#1e4cff" stroke-width="1.3"/><circle cx="699.5" cy="466.8" r="2.1" fill="#a0f0ff" stroke="#1e4cff" stroke-width="1.3"/><circle cx="698.6" cy="502.5" r="2.1" fill="#a0f0ff" stroke="#1e4cff" stroke-width="1.3"/><circle cx="738.4" cy="263.4" r="2.1" fill="#a0f0ff" stroke="#1e4cff" stroke-width="1.3"/><circle cx="736.5" cy="295.4" r="2.1" fill="#a0f0ff" stroke="#1e4cff" stroke-width="1.3"/><circle cx="754.3" cy="287.5" r="2.1" fill="#a0f0ff" stroke="#1e4cff" stroke-width="1.3"/><circle cx="753.4" cy="355.3" r="2.1" fill="#a0f0ff" stroke="#1e4cff" stroke-width="1.3"/><circle cx="769.7" cy="312.4" r="2.1" fill="#a0f0ff" stroke="#1e4cff" stroke-width="1.3"/><circle cx="767" cy="401" r="2.1" fill="#a0f0ff" stroke="#1e4cff" stroke-width="1.3"/><circle cx="767" cy="417.2" r="2.1" fill="#a0f0ff" stroke="#1e4cff" stroke-width="1.3"/><circle cx="765.2" cy="471.6" r="2.1" fill="#a0f0ff" stroke="#1e4cff" stroke-width="1.3"/><circle cx="808.5" cy="287.4" r="2.1" fill="#a0f0ff" stroke="#1e4cff" stroke-width="1.3"/><circle cx="807.7" cy="320.7" r="2.1" fill="#a0f0ff" stroke="#1e4cff" stroke-width="1.3"/><circle cx="824.2" cy="313.5" r="2.1" fill="#a0f0ff" stroke="#1e4cff" stroke-width="1.3"/><circle cx="823.7" cy="382.6" r="2.1" fill="#a0f0ff" stroke="#1e4cff" stroke-width="1.3"/><circle cx="827.3" cy="331.4" r="2.1" fill="#a0f0ff" stroke="#1e4cff" stroke-width="1.3"/><circle cx="827.6" cy="437.2" r="2.1" fill="#a0f0ff" stroke="#1e4cff" stroke-width="1.3"/><circle cx="878.3" cy="315" r="2.1" fill="#a0f0ff" stroke="#1e4cff" stroke-width="1.3"/><circle cx="878" cy="348.4" r="2.1" fill="#a0f0ff" stroke="#1e4cff" stroke-width="1.3"/><circle cx="882.8" cy="331.7" r="2.1" fill="#a0f0ff" stroke="#1e4cff" stroke-width="1.3"/><circle cx="934.7" cy="329.8" r="2.1" fill="#a0f0ff" stroke="#1e4cff" stroke-width="1.3"/><circle cx="934.1" cy="364.9" r="2.1" fill="#a0f0ff" stroke="#1e4cff" stroke-width="1.3"/><circle cx="964.5" cy="365.9" r="2.1" fill="#a0f0ff" stroke="#1e4cff" stroke-width="1.3"/><circle cx="963.7" cy="435.8" r="2.1" fill="#a0f0ff" stroke="#1e4cff" stroke-width="1.3"/><circle cx="1014.6" cy="363.6" r="2.1" fill="#a0f0ff" stroke="#1e4cff" stroke-width="1.3"/><circle cx="1013.6" cy="398.2" r="2.1" fill="#a0f0ff" stroke="#1e4cff" stroke-width="1.3"/><circle cx="1099.8" cy="388.5" r="2.1" fill="#a0f0ff" stroke="#1e4cff" stroke-width="1.3"/><circle cx="1097.8" cy="423" r="2.1" fill="#a0f0ff" stroke="#1e4cff" stroke-width="1.3"/><circle cx="1047.6" cy="427.1" r="2.1" fill="#a0f0ff" stroke="#1e4cff" stroke-width="1.3"/><circle cx="1047.6" cy="462" r="2.1" fill="#a0f0ff" stroke="#1e4cff" stroke-width="1.3"/><circle cx="856.8" cy="424.8" r="2.1" fill="#a0f0ff" stroke="#1e4cff" stroke-width="1.3"/><circle cx="856.8" cy="496" r="2.1" fill="#a0f0ff" stroke="#1e4cff" stroke-width="1.3"/><circle cx="910.8" cy="396.4" r="2.1" fill="#a0f0ff" stroke="#1e4cff" stroke-width="1.3"/><circle cx="911" cy="468.2" r="2.1" fill="#a0f0ff" stroke="#1e4cff" stroke-width="1.3"/><circle cx="993.6" cy="461.8" r="2.1" fill="#a0f0ff" stroke="#1e4cff" stroke-width="1.3"/><circle cx="993.6" cy="499.7" r="2.1" fill="#a0f0ff" stroke="#1e4cff" stroke-width="1.3"/><circle cx="788.6" cy="497" r="2.1" fill="#a0f0ff" stroke="#1e4cff" stroke-width="1.3"/><circle cx="787.8" cy="533.9" r="2.1" fill="#a0f0ff" stroke="#1e4cff" stroke-width="1.3"/><circle cx="871.8" cy="520.6" r="2.1" fill="#a0f0ff" stroke="#1e4cff" stroke-width="1.3"/><circle cx="870.8" cy="554.8" r="2.1" fill="#a0f0ff" stroke="#1e4cff" stroke-width="1.3"/><circle cx="936.6" cy="491.3" r="2.1" fill="#a0f0ff" stroke="#1e4cff" stroke-width="1.3"/><circle cx="937.6" cy="527.4" r="2.1" fill="#a0f0ff" stroke="#1e4cff" stroke-width="1.3"/><circle cx="882.3" cy="401" r="2.1" fill="#a0f0ff" stroke="#1e4cff" stroke-width="1.3"/></g></svg>
<div id="botbg" class="abs"></div>
<div id="bot" class="abs"></div>
<div id="botblk" class="abs"></div>
<svg class="abs" style="left:0;top:0" width="1500" height="843" viewBox="0 0 1500 843"><rect x="5" y="48" width="2" height="2" fill="#a8a8a8"/><rect x="5" y="52" width="2" height="2" fill="#a8a8a8"/><rect x="5" y="56" width="2" height="2" fill="#a8a8a8"/><rect x="5" y="60" width="2" height="2" fill="#a8a8a8"/><rect x="5" y="64" width="2" height="2" fill="#a8a8a8"/><line x1="83" y1="49" x2="83" y2="67" stroke="#c4c4c4" stroke-width="1"/><line x1="84" y1="49" x2="84" y2="67" stroke="#fafafa" stroke-width="1"/><line x1="115" y1="49" x2="115" y2="67" stroke="#c4c4c4" stroke-width="1"/><line x1="116" y1="49" x2="116" y2="67" stroke="#fafafa" stroke-width="1"/><line x1="215" y1="49" x2="215" y2="67" stroke="#c4c4c4" stroke-width="1"/><line x1="216" y1="49" x2="216" y2="67" stroke="#fafafa" stroke-width="1"/><line x1="246" y1="49" x2="246" y2="67" stroke="#c4c4c4" stroke-width="1"/><line x1="247" y1="49" x2="247" y2="67" stroke="#fafafa" stroke-width="1"/><line x1="415" y1="49" x2="415" y2="67" stroke="#c4c4c4" stroke-width="1"/><line x1="416" y1="49" x2="416" y2="67" stroke="#fafafa" stroke-width="1"/><line x1="469" y1="49" x2="469" y2="67" stroke="#c4c4c4" stroke-width="1"/><line x1="470" y1="49" x2="470" y2="67" stroke="#fafafa" stroke-width="1"/><line x1="569" y1="49" x2="569" y2="67" stroke="#c4c4c4" stroke-width="1"/><line x1="570" y1="49" x2="570" y2="67" stroke="#fafafa" stroke-width="1"/><line x1="667" y1="49" x2="667" y2="67" stroke="#c4c4c4" stroke-width="1"/><line x1="668" y1="49" x2="668" y2="67" stroke="#fafafa" stroke-width="1"/><line x1="813" y1="49" x2="813" y2="67" stroke="#c4c4c4" stroke-width="1"/><line x1="814" y1="49" x2="814" y2="67" stroke="#fafafa" stroke-width="1"/><line x1="867" y1="49" x2="867" y2="67" stroke="#c4c4c4" stroke-width="1"/><line x1="868" y1="49" x2="868" y2="67" stroke="#fafafa" stroke-width="1"/><line x1="920" y1="49" x2="920" y2="67" stroke="#c4c4c4" stroke-width="1"/><line x1="921" y1="49" x2="921" y2="67" stroke="#fafafa" stroke-width="1"/><line x1="1020" y1="49" x2="1020" y2="67" stroke="#c4c4c4" stroke-width="1"/><line x1="1021" y1="49" x2="1021" y2="67" stroke="#fafafa" stroke-width="1"/><line x1="1121" y1="49" x2="1121" y2="67" stroke="#c4c4c4" stroke-width="1"/><line x1="1122" y1="49" x2="1122" y2="67" stroke="#fafafa" stroke-width="1"/><rect x="254" y="49" width="2" height="2" fill="#a8a8a8"/><rect x="254" y="53" width="2" height="2" fill="#a8a8a8"/><rect x="254" y="57" width="2" height="2" fill="#a8a8a8"/><rect x="254" y="61" width="2" height="2" fill="#a8a8a8"/><rect x="254" y="65" width="2" height="2" fill="#a8a8a8"/><rect x="611" y="49" width="2" height="2" fill="#a8a8a8"/><rect x="611" y="53" width="2" height="2" fill="#a8a8a8"/><rect x="611" y="57" width="2" height="2" fill="#a8a8a8"/><rect x="611" y="61" width="2" height="2" fill="#a8a8a8"/><rect x="611" y="65" width="2" height="2" fill="#a8a8a8"/><rect x="1249" y="49" width="2" height="2" fill="#a8a8a8"/><rect x="1249" y="53" width="2" height="2" fill="#a8a8a8"/><rect x="1249" y="57" width="2" height="2" fill="#a8a8a8"/><rect x="1249" y="61" width="2" height="2" fill="#a8a8a8"/><rect x="1249" y="65" width="2" height="2" fill="#a8a8a8"/><g transform="translate(13,49)"><path d="M3.5 1.5h6l3 3v10h-9z" fill="#fff" stroke="#1a1a1a" stroke-width="1.4"/><path d="M9.5 1.5v3h3" fill="none" stroke="#1a1a1a" stroke-width="1.2"/></g><g transform="translate(36,49)"><path d="M1 5h4l1 1h6v8H1z" fill="#c8b820" stroke="#1a1a1a" stroke-width="1.2"/><path d="M3 8h12l-3 6H1z" fill="#a89818" stroke="#1a1a1a" stroke-width="1.2"/><path d="M8 4q3-4 6 0" fill="none" stroke="#1a1a1a" stroke-width="1.3"/><path d="M14 2v3h-3" fill="#1a1a1a"/></g><g transform="translate(59,49)"><rect x="1.5" y="1.5" width="13" height="13" fill="#1a1a1a"/><rect x="4" y="2" width="8" height="5" fill="#f4f4f4"/><rect x="3" y="9" width="10" height="5" fill="#181818"/><rect x="1.5" y="1.5" width="13" height="13" fill="none" stroke="#9a8a10" stroke-width="1"/><rect x="10" y="11" width="2" height="2" fill="#ddd"/></g><g transform="translate(90,49)"><path d="M3 14V2l9 9" fill="none" stroke="#8c8c8c" stroke-width="1.2"/><path d="M2 7h10M6 4v6" stroke="#b4b4b4"/><text x="3" y="16" font-size="6" fill="#8c8c8c" font-family="Liberation Sans">1-0</text></g><g transform="translate(120,49)"><path d="M2 2h6l2 2v7H2z" fill="#f0f0f0" stroke="#8c8c8c"/><path d="M7 6h5l2 2v7H7z" fill="#f8f8f8" stroke="#8c8c8c"/></g><g transform="translate(144,49)"><rect x="4" y="1" width="8" height="5" fill="#fff" stroke="#1a1a1a" stroke-width="1"/><path d="M1 6h14v6H1z" fill="#2aa0a8" stroke="#1a1a1a" stroke-width="1.2"/><rect x="3" y="11" width="10" height="4" fill="#fff" stroke="#1a1a1a" stroke-width="1"/><rect x="2" y="7" width="12" height="2" fill="#9ee0e0"/></g><g transform="translate(167,49)"><rect x="2" y="2" width="12" height="4" fill="#c0e8f0" stroke="#233" stroke-width="1"/><rect x="2" y="6" width="12" height="7" fill="#3aa8b8" stroke="#233" stroke-width="1"/><path d="M12 4v11" stroke="#1a5ad8" stroke-width="1.5"/><rect x="4" y="8" width="7" height="3" fill="#e8ffff"/></g><g transform="translate(190,49)"><path d="M2 7h11v7H2z" fill="#d8d8d8" stroke="#8c8c8c"/><path d="M2 7l2-3h8l1 3" fill="#e8e8e8" stroke="#8c8c8c"/><path d="M11 1v5M9 3h4" stroke="#8c8c8c"/></g><g transform="translate(220,49)"><path d="M6 13l7-9 2 2-7 9-3 1z" fill="#e0e0e0" stroke="#8c8c8c"/><path d="M2 3h1M2 7h1M2 11h1" stroke="#8c8c8c" stroke-width="2"/></g><g transform="translate(254,49)"><path d="M2 2v2M2 6v2M2 10v2M2 14v1" stroke="#8c8c8c" stroke-width="2"/><rect x="6" y="3" width="9" height="10" fill="none" stroke="#8c8c8c"/><path d="M6 8h9M10 3v10" stroke="#b4b4b4"/></g><g transform="translate(275,49)"><path d="M2 2h1M2 6h1M2 10h1M2 14h1" stroke="#8c8c8c" stroke-width="2"/><path d="M5 2h10M5 5h9M5 8h10M5 11h9M5 14h10" stroke="#8c8c8c" stroke-width="1.2"/></g><g transform="translate(298,49)"><path d="M4 1v14M8 1v14M12 1v14M1 4h14M1 8h14M1 12h14" stroke="#8c8c8c" stroke-width="1.6"/></g><g transform="translate(321,49)"><circle cx="10" cy="4" r="2.5" fill="none" stroke="#8c8c8c" stroke-width="1.3"/><circle cx="4" cy="11" r="2.5" fill="none" stroke="#8c8c8c" stroke-width="1.3"/><path d="M10 6.5v9M6.5 11h8" stroke="#8c8c8c" stroke-width="1.3"/></g><g transform="translate(344,49)"><path d="M3 14L13 3" stroke="#8c8c8c" stroke-width="1.3"/></g><g transform="translate(368,49)"><circle cx="8" cy="8" r="5.5" fill="none" stroke="#8c8c8c" stroke-width="1.4"/></g><g transform="translate(391,49)"><path d="M12 2H6q-4 0-4 4t4 4h6q2 0 2 2.5T11 15H6" fill="none" stroke="#8c8c8c" stroke-width="1.3"/></g><g transform="translate(422,49)"><text x="0" y="14" font-size="13" font-weight="bold" fill="#1a1a1a" font-family="Liberation Sans">Aa</text></g><g transform="translate(444,49)"><rect x="2" y="2" width="12" height="12" fill="#e8e8e8" stroke="#8c8c8c"/><path d="M4 5h8M4 8h8M4 11h8" stroke="#8c8c8c"/></g><g transform="translate(476,49)"><path d="M1 6v8M15 6v8M1 10h14" stroke="#8c8c8c" stroke-width="1.2"/><path d="M1 10l3-2v4zM15 10l-3-2v4z" fill="#8c8c8c"/><path d="M6 1v5h3" fill="none" stroke="#8c8c8c"/></g><g transform="translate(499,49)"><path d="M1 8l7-7M1 12l11-11M3 14l12-12M7 14l8-8M11 14l4-4" stroke="#b4b4b4" stroke-width="1.5"/></g><g transform="translate(522,49)"><path d="M3 15L7 1h2l4 14M5 9h6" fill="none" stroke="#8c8c8c" stroke-width="1.3"/><circle cx="12" cy="11" r="3.5" fill="#bbb"/></g><g transform="translate(545,49)"><rect x="2" y="3" width="10" height="11" fill="#d0d0d0" stroke="#8c8c8c"/><circle cx="10" cy="6" r="4" fill="#b8b8b8"/><text x="3" y="15" font-size="5" fill="#555" font-family="Liberation Sans">bmp</text></g><g transform="translate(576,49)"><path d="M3 15L13 4" stroke="#1a1a1a" stroke-width="2.2"/><path d="M9 2l5 5 2-2-4-4z" fill="#8a7a10" stroke="#1a1a1a" stroke-width="0.8"/><path d="M13 15L4 5" stroke="#1a1a1a" stroke-width="2"/><path d="M1 4q0-3 3-3l1 2-2 2z" fill="#1a1a1a"/></g><g transform="translate(618,49)"><rect x="1" y="5" width="10" height="10" fill="#e8e8e8" stroke="#8c8c8c"/><path d="M3 8h6M3 10h6M3 12h6" stroke="#8c8c8c"/><path d="M8 2h5l2 3-2 3H8z" fill="#d0d0d0" stroke="#8c8c8c"/></g><g transform="translate(642,49)"><path d="M1 8q5-6 10 0q-5 5-10 0zM11 8l4-3v6z" fill="#d8d8d8" stroke="#8c8c8c"/><rect x="2" y="9" width="7" height="4" fill="#e8e8e8" stroke="#8c8c8c"/></g><g transform="translate(673,49)"><path d="M1 1h10l4 4v10H1z" fill="#ececec" stroke="#8c8c8c"/><circle cx="8" cy="8" r="3" fill="none" stroke="#8c8c8c" stroke-width="1.3"/></g><g transform="translate(696,49)"><rect x="2" y="2" width="12" height="12" fill="#e0e0e0" stroke="#8c8c8c" stroke-width="1.3"/><path d="M3 11l8-8M5 13l8-8" stroke="#8c8c8c"/></g><g transform="translate(719,49)"><circle cx="5" cy="5" r="3" fill="none" stroke="#8c8c8c" stroke-width="1.3"/><text x="8" y="15" font-size="9" fill="#8c8c8c" font-family="Liberation Serif">N</text></g><g transform="translate(742,49)"><path d="M1 10h14M4 5v10M9 1v6M12 5v10M7 7h8" stroke="#8c8c8c" stroke-width="1.2" fill="none"/></g><g transform="translate(765,49)"><path d="M8 1v4M3 10l5-5 5 5M1 10h14M3 14h10M8 10v4" stroke="#8c8c8c" stroke-width="1.2" fill="none"/></g><g transform="translate(788,49)"><path d="M6 1v5L2 12h12L10 6V1M1 9h3M12 9h3M2 14h12" stroke="#8c8c8c" stroke-width="1.3" fill="none"/></g><g transform="translate(819,49)"><rect x="1" y="2" width="9" height="3" rx="1.5" fill="none" stroke="#8c8c8c"/><rect x="1" y="6" width="9" height="3" rx="1.5" fill="none" stroke="#8c8c8c"/><rect x="1" y="10" width="9" height="3" rx="1.5" fill="none" stroke="#8c8c8c"/><path d="M13 15V5M11 7l2-3 2 3" stroke="#8c8c8c" fill="none"/></g><g transform="translate(842,49)"><rect x="1" y="2" width="14" height="12" rx="1" fill="#f0f0f0" stroke="#8c8c8c" stroke-width="1.2"/><rect x="3" y="4" width="10" height="2" fill="#8c8c8c"/><path d="M4 9h1M7 9h1M10 9h1M4 12h1M7 12h1M10 12h1" stroke="#8c8c8c"/></g><g transform="translate(873,49)"><rect x="2" y="1" width="9" height="7" fill="#fff" stroke="#1a1a1a" stroke-width="1.3"/><rect x="5" y="6" width="10" height="8" fill="#fff" stroke="#1a1a1a" stroke-width="1.3"/><rect x="5" y="6" width="10" height="2" fill="#1a5ad8"/></g><g transform="translate(895,49)"><path d="M3 15V6M7 15V3M11 15V3M15 15V9M1 7h8M1 11h14M9 5h6" stroke="#1a1a1a" stroke-width="1.5"/></g><g transform="translate(927,49)"><text x="5" y="8" font-size="8" fill="#8c8c8c" font-family="Liberation Sans">S</text><path d="M1 10l4 4h6l4-4M1 15h14" stroke="#8c8c8c" stroke-width="1.4" fill="none"/></g><g transform="translate(950,49)"><path d="M1 6q7-4 14 0M1 10q7-4 14 0" stroke="#8c8c8c" stroke-width="1.4" fill="none"/></g><g transform="translate(973,49)"><path d="M2 14L14 2M8 10q0 4 3 4t3-4" stroke="#8c8c8c" stroke-width="1.2" fill="none"/><rect x="9" y="9" width="6" height="5" fill="#888"/></g><g transform="translate(996,49)"><rect x="2" y="7" width="5" height="8" fill="#888"/><rect x="9" y="7" width="5" height="8" fill="#888"/><path d="M1 1v14M1 1h14" stroke="#8c8c8c" fill="none"/></g><g transform="translate(1027,49)"><path d="M1 2h14v8H9v5H1z" fill="#f4f4f4" stroke="#8c8c8c" stroke-width="1.3"/><path d="M4 5h2M10 5h2M4 11h2" stroke="#777" stroke-width="2"/></g><g transform="translate(1050,49)"><path d="M2 15V2h13M5 15V5h10" stroke="#8c8c8c" stroke-width="1.4" fill="none"/><rect x="11" y="7" width="3" height="2" fill="#8c8c8c"/></g><g transform="translate(1073,49)"><path d="M3 2v12h10V2M3 5l2-3M13 5l-2-3" stroke="#8c8c8c" stroke-width="1.3" fill="none"/></g><g transform="translate(1096,49)"><path d="M2 2h12v9H7l-3 3v-3H2z" fill="#f4f4f4" stroke="#8c8c8c" stroke-width="1.2"/><path d="M4 5h8M4 7h8M4 9h6" stroke="#8c8c8c"/></g><g transform="translate(1127,49)"><path d="M4 15l-3-6 2-1 2 2V3h2v5V1h2v7V2h2v7V4h2v7l-2 4z" fill="#f8f8f8" stroke="#8c8c8c" stroke-width="1.1"/></g><g transform="translate(1150,49)"><path d="M3 8v7h4V8zM9 8v7h4V8z" fill="#999" stroke="#777"/><path d="M5 6q3-6 8-2M13 2v3h-3" stroke="#8c8c8c" stroke-width="1.2" fill="none"/></g><g transform="translate(1174,49)"><path d="M3 8v7h4V8zM9 8v7h4V8z" fill="#999" stroke="#777"/><path d="M5 6q3-6 8-2M13 2v3h-3" stroke="#8c8c8c" stroke-width="1.2" fill="none"/></g><g transform="translate(1196,49)"><path d="M2 2L14 14M14 2L2 14" stroke="#a01010" stroke-width="2.2"/></g><g transform="translate(1219,49)"><path d="M1 9q0-4 7-4t7 4v4q-7 3-14 0z" fill="#d01010" stroke="#400" stroke-width="1"/><path d="M4 2h9l-2 6H3z" fill="#e8e020" stroke="#333" stroke-width="1"/></g><g transform="translate(1256,49)"><path d="M2 5h9v10H2zM2 5l3-3h9v10l-3 3M11 5l3-3" fill="none" stroke="#8c8c8c" stroke-width="1.2"/><rect x="5" y="7" width="4" height="4" fill="none" stroke="#b4b4b4"/></g><g transform="translate(1280,49)"><path d="M2 5h9v10H2z" fill="#f4f4f4" stroke="#8c8c8c"/><path d="M2 5l3-3h9v10l-3 3M11 5l3-3" fill="none" stroke="#8c8c8c" stroke-width="1.2"/></g><g transform="translate(1303,49)"><path d="M1 4h8v10H1zM1 4l3-3h8v3" fill="#f0f0f0" stroke="#8c8c8c"/><rect x="7" y="6" width="8" height="10" fill="#f0f0f0" stroke="#8c8c8c"/><path d="M9 9h4M9 11h4M9 13h4" stroke="#8c8c8c"/></g><g transform="translate(1326,49)"><path d="M2 3v12" stroke="#8c8c8c" stroke-width="2"/><rect x="5" y="8" width="10" height="7" fill="#999"/><path d="M6 8q3-6 8-5" stroke="#8c8c8c" fill="none" stroke-width="1.3"/></g><rect x="66.5" y="72.5" width="22" height="22" fill="#dcecf8" stroke="#3b94e0" stroke-width="1.3"/><rect x="312.5" y="72.5" width="22" height="22" fill="#dcecf8" stroke="#3b94e0" stroke-width="1.3"/><rect x="335.5" y="72.5" width="22" height="22" fill="#dcecf8" stroke="#3b94e0" stroke-width="1.3"/><rect x="427.5" y="72.5" width="22" height="22" fill="#dcecf8" stroke="#3b94e0" stroke-width="1.3"/><rect x="505.5" y="72.5" width="22" height="22" fill="#dcecf8" stroke="#3b94e0" stroke-width="1.3"/><rect x="528.5" y="72.5" width="22" height="22" fill="#dcecf8" stroke="#3b94e0" stroke-width="1.3"/><line x1="117" y1="75" x2="117" y2="93" stroke="#c4c4c4" stroke-width="1"/><line x1="118" y1="75" x2="118" y2="93" stroke="#fafafa" stroke-width="1"/><line x1="216" y1="75" x2="216" y2="93" stroke="#c4c4c4" stroke-width="1"/><line x1="217" y1="75" x2="217" y2="93" stroke="#fafafa" stroke-width="1"/><line x1="500" y1="75" x2="500" y2="93" stroke="#c4c4c4" stroke-width="1"/><line x1="501" y1="75" x2="501" y2="93" stroke="#fafafa" stroke-width="1"/><line x1="739" y1="75" x2="739" y2="93" stroke="#c4c4c4" stroke-width="1"/><line x1="740" y1="75" x2="740" y2="93" stroke="#fafafa" stroke-width="1"/><line x1="862" y1="75" x2="862" y2="93" stroke="#c4c4c4" stroke-width="1"/><line x1="863" y1="75" x2="863" y2="93" stroke="#fafafa" stroke-width="1"/><g transform="translate(69,75)"><path d="M5 3h9l-3 10H2z" fill="none" stroke="#d01818" stroke-width="1.2"/><circle cx="5" cy="3" r="2" fill="#20c020" stroke="#086008"/><circle cx="14" cy="3" r="2" fill="#20c020" stroke="#086008"/><circle cx="11" cy="13" r="2" fill="#20c020" stroke="#086008"/><circle cx="2.5" cy="13" r="2" fill="#20c020" stroke="#086008"/></g><g transform="translate(92,75)"><path d="M1 8l14-5v8L1 14z" fill="#b8b8b8" stroke="#1a1a1a" stroke-width="1.3"/><path d="M4 9v4M12 6v4" stroke="#555"/></g><g transform="translate(123,75)"><rect x="1" y="1" width="14" height="14" fill="#e8e8e8" stroke="#b4b4b4"/><path d="M1 12l5-6 4 5 2-2 3 4" stroke="#8c8c8c" fill="none" stroke-width="1.2"/></g><g transform="translate(146,75)"><path d="M2 15V2M2 15h13" stroke="#8c8c8c" stroke-width="1.2"/><path d="M3 13q2-9 10-9" stroke="#8c8c8c" fill="none" stroke-width="1.2"/></g><g transform="translate(169,75)"><rect x="1" y="1" width="14" height="14" fill="#ececec" stroke="#b4b4b4"/><path d="M2 13l6-5 2 2 4-5" stroke="#8c8c8c" fill="none" stroke-width="1.2"/></g><g transform="translate(192,75)"><rect x="1" y="1" width="12" height="12" fill="#1a1a1a"/><rect x="3" y="2" width="7" height="4" fill="#c8c020"/><path d="M5 10l6-5 5 4-6 6z" fill="#d01818" stroke="#600" stroke-width="0.8"/></g><g transform="translate(222,75)"><path d="M7 8l-6 4M7 8l2-7M7 8l2 5" stroke="#d01818" stroke-width="2.4"/><circle cx="12" cy="9" r="1.8" fill="#1a1a1a"/><rect x="11" y="11" width="3" height="5" fill="#1a1a1a"/></g><g transform="translate(246,75)"><circle cx="4" cy="11" r="3.5" fill="#fff" stroke="#999"/><path d="M6 8l6-5" stroke="#d01818" stroke-width="2.4"/><circle cx="12" cy="8" r="1.8" fill="#1a1a1a"/><rect x="11" y="10" width="3" height="6" fill="#1a1a1a"/></g><g transform="translate(268,75)"><path d="M7 8V1M7 8L1 14M7 8l6 6" stroke="#d01818" stroke-width="1.4"/><rect x="10" y="2" width="4" height="4" fill="#666"/></g><g transform="translate(292,75)"><text x="0" y="9" font-size="8" font-weight="bold" fill="#222" font-family="Liberation Serif">B1.2</text><path d="M3 13h10" stroke="#d01818" stroke-width="2"/></g><g transform="translate(315,75)"><text x="2" y="9" font-size="8" font-weight="bold" fill="#1a3a9a" font-family="Liberation Serif">B</text><rect x="9" y="3" width="4" height="6" fill="#ccc"/><path d="M3 13h10" stroke="#d01818" stroke-width="2"/></g><g transform="translate(338,75)"><text x="-1" y="9" font-size="7.5" font-weight="bold" fill="#222" font-family="Liberation Serif">25/10</text><path d="M3 13h10" stroke="#d01818" stroke-width="2"/></g><g transform="translate(361,75)"><text x="-1" y="11" font-size="8.5" font-weight="bold" fill="#444" font-family="Liberation Serif">(xyz)</text></g><g transform="translate(384,75)"><path d="M6 11l6-9 2 1-6 9-2 1z" fill="#fff" stroke="#1a1a1a" stroke-width="1.1"/><path d="M3 14h10" stroke="#d01818" stroke-width="2"/></g><g transform="translate(407,75)"><path d="M3 3v11h11" stroke="#1a5ad8" stroke-width="1.6" fill="none"/><path d="M4 13L14 3" stroke="#d01818" stroke-width="1.8"/><path d="M11 2h4v4z M1 5l2-3 2 3zM12 12l3 2-3 2z" fill="#1a5ad8"/></g><g transform="translate(430,75)"><rect x="2" y="2" width="12" height="12" fill="none" stroke="#1a1a1a" stroke-width="1.5"/><path d="M3 13L13 3" stroke="#d01818" stroke-width="1.8"/><path d="M1 2h2M13 2h2M1 14h2M13 14h2" stroke="#666"/></g><g transform="translate(453,75)"><path d="M1 3h14M3 3v12M11 3l-2 12M4 6l3-3M10 6l3-3" stroke="#d01818" stroke-width="1.6" fill="none"/><path d="M1 15h4M8 15h4" stroke="#444" stroke-width="1.5"/></g><g transform="translate(476,75)"><path d="M2 15V6l6-4 6 4v9M2 6h12" stroke="#333" stroke-width="1.6" fill="none"/><path d="M5 5l3-2 3 2" stroke="#d01818" stroke-width="1.2" fill="none"/></g><g transform="translate(508,75)"><path d="M8 8V1M8 8l-7 5M8 8l7 5" stroke="#d01818" stroke-width="2.8"/><circle cx="8" cy="8" r="1.5" fill="#fff"/></g><g transform="translate(531,75)"><path d="M1 4h10v11H1z" fill="#f0f0f0" stroke="#333" stroke-width="1.4"/><path d="M1 4l3-3h11v11l-4 3M11 4l4-3" fill="none" stroke="#333" stroke-width="1.4"/><rect x="4" y="6" width="5" height="5" fill="none" stroke="#aaa"/></g><g transform="translate(553,75)"><path d="M5 1h10l-4 14H1z" fill="#f8f8f8" stroke="#d01818" stroke-width="1.3"/><path d="M5 1l1 2" stroke="#333"/></g><g transform="translate(576,75)"><rect x="1" y="6" width="14" height="9" fill="#fff" stroke="#1a1a1a" stroke-width="1.6"/><rect x="1" y="4" width="14" height="3" fill="#8a0a0a"/><path d="M6 6v9M10 6v9" stroke="#1a1a1a" stroke-width="1.4"/><path d="M6 4V1h4v3" stroke="#1a1a1a" fill="none"/></g><g transform="translate(599,75)"><rect x="1" y="6" width="14" height="9" fill="#fff" stroke="#1a1a1a" stroke-width="1.6"/><rect x="1" y="4" width="14" height="3" fill="#8a0a0a"/><path d="M6 4V1h4v3" stroke="#1a1a1a" fill="none"/><path d="M1 9h14" stroke="#1a1a1a"/></g><g transform="translate(622,75)"><rect x="1" y="5" width="14" height="10" fill="#fff" stroke="#1a1a1a" stroke-width="1.6"/><rect x="1" y="3" width="14" height="3" fill="#8a0a0a"/></g><g transform="translate(645,75)"><rect x="1" y="6" width="14" height="9" fill="#fff" stroke="#1a1a1a" stroke-width="1.6"/><path d="M6 6V2h4v4" stroke="#1a1a1a" fill="none" stroke-width="1.3"/><rect x="10" y="5" width="5" height="2" fill="#8a0a0a"/></g><g transform="translate(668,75)"><path d="M1 1h14v8h-4v6H5V9H1z" fill="#8a0808" stroke="#1a1a1a" stroke-width="1.2"/><rect x="6" y="4" width="3" height="3" fill="#222"/></g><g transform="translate(691,75)"><path d="M1 1h14v8h-4v6H5V9H1z" fill="#fff" stroke="#1a1a1a" stroke-width="1.6"/></g><g transform="translate(714,75)"><path d="M1 6l7-4 7 4v7l-7 3-7-3z" fill="#fff" stroke="#1a1a1a" stroke-width="1.3"/><path d="M1 6l7 3 7-3-7-4z" fill="#7a0808" stroke="#1a1a1a"/><path d="M8 9v7" stroke="#1a1a1a"/></g><g transform="translate(745,75)"><path d="M2 15V1h12v14M2 5h12M2 10h12" stroke="#222" stroke-width="1.6" fill="none"/><path d="M3 7h10" stroke="#d01818" stroke-width="2"/><path d="M1 15h3M12 15h3" stroke="#222" stroke-width="1.5"/></g><g transform="translate(768,75)"><path d="M2 15V1h9v14M2 5h9M2 10h9" stroke="#222" stroke-width="1.6" fill="none"/><path d="M3 12h7" stroke="#d01818" stroke-width="2"/><path d="M13 2v8M11 8l2 3 2-3" stroke="#1a5ad8" stroke-width="1.6" fill="none"/></g><g transform="translate(791,75)"><path d="M2 15V1h9v14M2 5h9M2 10h9" stroke="#222" stroke-width="1.6" fill="none"/><path d="M2 2h9" stroke="#d01818" stroke-width="2.4"/><path d="M13 12V4M11 6l2-3 2 3" stroke="#2a6ad8" stroke-width="1.6" fill="none"/></g><g transform="translate(814,75)"><path d="M2 15V1h13v14M2 5h13M2 10h13" stroke="#888" stroke-width="1.5" fill="none"/><rect x="2" y="4" width="5" height="7" fill="#b8e0f8" stroke="#1a5ad8" stroke-width="1.2"/></g><g transform="translate(837,75)"><path d="M2 15V1h13v14M2 5h13M2 10h13" stroke="#bbb" stroke-width="1.5" fill="none"/><path d="M4 7h8" stroke="#ccc" stroke-width="2"/></g><g transform="translate(868,75)"><path d="M15 8H6" stroke="#1a1a1a" stroke-width="3"/><path d="M1 8l6-5v10z" fill="#1a1a1a"/></g><g transform="translate(891,75)"><path d="M1 8h9" stroke="#1a1a1a" stroke-width="3"/><path d="M15 8l-6-5v10z" fill="#1a1a1a"/></g><g transform="translate(914,75)"><path d="M8 15V6" stroke="#1a1a1a" stroke-width="3"/><path d="M8 1l-5 6h10z" fill="#1a1a1a"/></g><g transform="translate(938,75)"><path d="M8 1v9" stroke="#1a1a1a" stroke-width="3"/><path d="M8 15l-5-6h10z" fill="#1a1a1a"/></g><g transform="translate(961,75)"><path d="M1 5h4l1 1h6v8H1z" fill="#fff" stroke="#1a1a1a" stroke-width="1.3"/><path d="M3 9h12l-3 5H1z" fill="#ddd" stroke="#1a1a1a" stroke-width="1.3"/><path d="M10 6l4-4M11 2h3v3" stroke="#1a1a1a" stroke-width="1.3" fill="none"/></g><g><rect x="7" y="76" width="2" height="2" fill="#a0a0a0"/><rect x="11" y="76" width="2" height="2" fill="#a0a0a0"/><rect x="15" y="76" width="2" height="2" fill="#a0a0a0"/><rect x="19" y="76" width="2" height="2" fill="#a0a0a0"/><rect x="23" y="76" width="2" height="2" fill="#a0a0a0"/><rect x="27" y="76" width="2" height="2" fill="#a0a0a0"/><rect x="43" y="76" width="2" height="2" fill="#a0a0a0"/><rect x="47" y="76" width="2" height="2" fill="#a0a0a0"/><rect x="51" y="76" width="2" height="2" fill="#a0a0a0"/><rect x="55" y="76" width="2" height="2" fill="#a0a0a0"/></g><g transform="translate(6,83) scale(1.35)"><path d="M2 14h14M9 4v14M5 8l8 8" stroke="#8a8a8a" stroke-width="1.3"/><path d="M8 3v4M10 3v4" stroke="#aaa"/></g><g transform="translate(6,116) scale(1.35)"><path d="M2 17V7l4-4h10v14M6 3v14M12 3v14M2 9h14M2 13h14" stroke="#8a8a8a" stroke-width="1.3" fill="none"/></g><g transform="translate(6,150) scale(1.35)"><path d="M2 15q-2-3 1-5l6-8q3-1 4 2l-6 9q-2 3-5 2z" fill="#e8e8e8" stroke="#8a8a8a" stroke-width="1.2"/><path d="M9 7h7l-4 9H5" fill="#f0f0f0" stroke="#8a8a8a" stroke-width="1.2"/><path d="M10 10h3M9 13h3" stroke="#777" stroke-width="1.5"/></g><g transform="translate(6,184) scale(1.35)"><path d="M2 17V5M8 17V3M14 17V5M2 8h12M2 12h12M5 5l3-2 6 2" stroke="#8a8a8a" stroke-width="1.3" fill="none"/></g><g transform="translate(6,218) scale(1.35)"><path d="M1 17L15 2M4 17L17 4M3 14l3 2M6 11l3 2M9 8l3 2M12 5l3 2" stroke="#8a8a8a" stroke-width="1.2" fill="none"/></g><g transform="translate(6,253) scale(1.35)"><path d="M1 8h15l-1 4H1zM2 12v6M6 12v5M13 12v5" stroke="#8a8a8a" stroke-width="1.2" fill="none"/><path d="M4 8V3h2" stroke="#8a8a8a" fill="none"/></g><g transform="translate(6,287) scale(1.35)"><path d="M2 15q-2-3 1-5l6-8q3-1 4 2l-6 9q-2 3-5 2z" fill="#e8e8e8" stroke="#8a8a8a" stroke-width="1.2"/><path d="M9 7h7l-4 9H5" fill="#f0f0f0" stroke="#8a8a8a" stroke-width="1.2"/><path d="M10 10h3M9 13h3" stroke="#777" stroke-width="1.5"/></g><g transform="translate(6,321) scale(1.35)"><path d="M2 15q-2-3 1-5l6-8q3-1 4 2l-6 9q-2 3-5 2z" fill="#e8e8e8" stroke="#8a8a8a" stroke-width="1.2"/><path d="M9 7h7l-4 9H5" fill="#f0f0f0" stroke="#8a8a8a" stroke-width="1.2"/><path d="M10 10h3M9 13h3" stroke="#777" stroke-width="1.5"/></g><g transform="translate(6,355) scale(1.35)"><rect x="4" y="1" width="11" height="16" rx="1" fill="#f0f0f0" stroke="#8a8a8a" stroke-width="1.2"/><rect x="6" y="3" width="7" height="3" fill="#ddd" stroke="#8a8a8a"/><path d="M6 9h2M10 9h2M6 12h2M10 12h2M6 15h2M10 15h2" stroke="#8a8a8a"/></g><g transform="translate(6,390) scale(1.35)"><rect x="3" y="1" width="10" height="9" fill="#f0f0f0" stroke="#8a8a8a"/><path d="M3 4h10M6 1v9" stroke="#aaa"/><path d="M1 17h16M2 13l5 3 4-5 6 6" stroke="#8a8a8a" stroke-width="1.2" fill="none"/></g><g transform="translate(6,424) scale(1.35)"><text x="0" y="8" font-size="7" fill="#999" font-family="Liberation Serif">M</text><path d="M2 13q3 0 5-2t4 3l3-6M1 13h16M9 6v12" stroke="#8a8a8a" stroke-width="1.2" fill="none"/></g><g transform="translate(6,458) scale(1.35)"><rect x="2" y="1" width="14" height="16" fill="#eee" stroke="#8a8a8a"/><text x="3" y="9" font-size="8" fill="#777" font-family="Liberation Sans">CN</text><path d="M2 16l5-4 3 2 6-5" stroke="#8a8a8a" fill="none"/></g><g transform="translate(6,491) scale(1.35)"><rect x="7" y="1" width="10" height="9" rx="1" fill="#f0f0f0" stroke="#8a8a8a"/><path d="M9 4h6M9 6h6M9 8h6" stroke="#999"/><path d="M1 14h4l2-3 2 6 2-4h6" stroke="#8a8a8a" stroke-width="1.2" fill="none"/></g><g transform="translate(6,525) scale(1.35)"><text x="0" y="8" font-size="7" fill="#999" font-family="Liberation Serif">M</text><path d="M2 13q3 0 5-2t4 3l3-6M1 13h16M9 6v12" stroke="#8a8a8a" stroke-width="1.2" fill="none"/></g><g transform="translate(6,559) scale(1.35)"><rect x="9" y="1" width="8" height="7" rx="1" fill="#f0f0f0" stroke="#999"/><text x="0" y="17" font-size="9" fill="#aaa" font-family="Liberation Serif">P&amp;T</text></g><g transform="translate(6,593) scale(1.35)"><text x="0" y="6" font-size="6" fill="#aaa" font-family="Liberation Serif">M</text><path d="M6 8q3 0 6-6M1 9h16" stroke="#999" fill="none"/><text x="0" y="17" font-size="9" fill="#aaa" font-family="Liberation Serif">P&amp;T</text></g><g transform="translate(6,629) scale(1.35)"><path d="M1 7l7-5 9 6-7 6z" fill="#a4a4a4" stroke="#8a8a8a" stroke-width="0.8"/><path d="M1 7v3l9 6 7-5V8l-7 6z" fill="#d8d8d8" stroke="#8a8a8a" stroke-width="0.8"/><path d="M4 8l6 4" stroke="#c8c8c8"/></g><g transform="translate(40,81) scale(1.25)"><rect x="1" y="3" width="14" height="12" fill="#888" stroke="#666"/><path d="M1 3l2-2h13v12l-1 2" fill="#aaa" stroke="#666"/><path d="M3 6h10M3 9h10M3 12h10M5 3v12M9 3v12M12 3v12" stroke="#bbb" stroke-dasharray="1 1"/></g><g transform="translate(40,103) scale(1.25)"><rect x="1" y="1" width="14" height="13" fill="#f4f4f4" stroke="#8a8a8a" stroke-width="1.2"/><rect x="3" y="4" width="10" height="8" fill="none" stroke="#8a8a8a"/><path d="M8 4v8" stroke="#8a8a8a"/></g><g transform="translate(40,125) scale(1.25)"><path d="M1 9h11l3-3H4z" fill="#eee" stroke="#8a8a8a"/><path d="M1 9v3h11l3-3V6" fill="#ddd" stroke="#8a8a8a"/><path d="M3 5q4-4 10-2" stroke="#8a8a8a" fill="none"/></g><g transform="translate(40,147) scale(1.25)"><path d="M1 12h11l3-5H5z" fill="#ccc" stroke="#999"/></g><g transform="translate(40,169) scale(1.25)"><path d="M2 14l10-12h3L5 14zM2 14v-3l10-9" fill="#eee" stroke="#8a8a8a" stroke-width="1.2"/></g><g transform="translate(40,191) scale(1.25)"><rect x="1" y="1" width="14" height="7" fill="#e8a020" stroke="#555"/><rect x="3" y="2" width="4" height="4" fill="#ffee40" stroke="#333"/><rect x="9" y="2" width="4" height="4" fill="#ffee40" stroke="#333"/><rect x="2" y="9" width="12" height="6" fill="#d01010" stroke="#333"/><rect x="5" y="10" width="6" height="3" fill="#fff"/></g><g transform="translate(40,213) scale(1.25)"><rect x="1" y="1" width="14" height="14" fill="#f4f4f4" stroke="#8a8a8a"/><path d="M1 8h14M8 1v14" stroke="#8a8a8a"/><text x="2" y="7" font-size="5" fill="#888" font-family="Liberation Sans">PI</text></g><g transform="translate(40,245) scale(1.25)"><path d="M6 1h4v9a4 4 0 1 1-4 0z" fill="#ddd" stroke="#8a8a8a" stroke-width="1.2"/></g><g transform="translate(40,266) scale(1.25)"><path d="M1 8l8-4v8z" fill="none" stroke="#8a8a8a" stroke-width="1.2"/><path d="M11 4l3-2M12 8h3M11 12l3 2" stroke="#aaa"/></g><g transform="translate(40,288) scale(1.25)"><rect x="6" y="1" width="4" height="4" fill="#bbb"/><circle cx="8" cy="10" r="5" fill="#ddd" stroke="#8a8a8a"/></g><g transform="translate(40,310) scale(1.25)"><path d="M8 2l6 6-6 6-6-6z" fill="#bbb" stroke="#999"/><path d="M1 1l3 3M15 1l-3 3M1 15l3-3M15 15l-3-3" stroke="#ccc"/></g><g transform="translate(40,331) scale(1.25)"><rect x="3" y="2" width="9" height="6" fill="#bbb" stroke="#8a8a8a"/><path d="M12 3l3-2v8l-3-2zM1 4h2v3H1z" fill="#aaa" stroke="#8a8a8a"/><path d="M7 8l-4 8M7 8v8M7 8l4 8" stroke="#8a8a8a"/></g><line x1="40" y1="240" x2="60" y2="240" stroke="#c8c8c8"/><rect x="5" y="797" width="2" height="2" fill="#a8a8a8"/><rect x="5" y="801" width="2" height="2" fill="#a8a8a8"/><rect x="5" y="805" width="2" height="2" fill="#a8a8a8"/><rect x="5" y="809" width="2" height="2" fill="#a8a8a8"/><rect x="5" y="813" width="2" height="2" fill="#a8a8a8"/><rect x="604.5" y="796.5" width="22" height="21" fill="#dcecf8" stroke="#3b94e0" stroke-width="1.3"/><rect x="773.5" y="796.5" width="22" height="21" fill="#dcecf8" stroke="#3b94e0" stroke-width="1.3"/><rect x="804.5" y="796.5" width="22" height="21" fill="#dcecf8" stroke="#3b94e0" stroke-width="1.3"/><rect x="835.5" y="796.5" width="22" height="21" fill="#dcecf8" stroke="#3b94e0" stroke-width="1.3"/><rect x="858.5" y="796.5" width="22" height="21" fill="#dcecf8" stroke="#3b94e0" stroke-width="1.3"/><rect x="881.5" y="796.5" width="22" height="21" fill="#dcecf8" stroke="#3b94e0" stroke-width="1.3"/><rect x="904.5" y="796.5" width="22" height="21" fill="#dcecf8" stroke="#3b94e0" stroke-width="1.3"/><rect x="927.5" y="796.5" width="22" height="21" fill="#dcecf8" stroke="#3b94e0" stroke-width="1.3"/><rect x="950.5" y="796.5" width="22" height="21" fill="#dcecf8" stroke="#3b94e0" stroke-width="1.3"/><rect x="973.5" y="796.5" width="22" height="21" fill="#dcecf8" stroke="#3b94e0" stroke-width="1.3"/><rect x="996.5" y="796.5" width="22" height="21" fill="#dcecf8" stroke="#3b94e0" stroke-width="1.3"/><rect x="1019.5" y="796.5" width="22" height="21" fill="#dcecf8" stroke="#3b94e0" stroke-width="1.3"/><rect x="1042.5" y="796.5" width="22" height="21" fill="#dcecf8" stroke="#3b94e0" stroke-width="1.3"/><rect x="1065.5" y="796.5" width="22" height="21" fill="#dcecf8" stroke="#3b94e0" stroke-width="1.3"/><rect x="1088.5" y="796.5" width="22" height="21" fill="#dcecf8" stroke="#3b94e0" stroke-width="1.3"/><rect x="1111.5" y="796.5" width="22" height="21" fill="#dcecf8" stroke="#3b94e0" stroke-width="1.3"/><rect x="1134.5" y="796.5" width="22" height="21" fill="#dcecf8" stroke="#3b94e0" stroke-width="1.3"/><rect x="1157.5" y="796.5" width="22" height="21" fill="#dcecf8" stroke="#3b94e0" stroke-width="1.3"/><line x1="61" y1="798" x2="61" y2="815" stroke="#c4c4c4" stroke-width="1"/><line x1="62" y1="798" x2="62" y2="815" stroke="#fafafa" stroke-width="1"/><line x1="253" y1="798" x2="253" y2="815" stroke="#c4c4c4" stroke-width="1"/><line x1="254" y1="798" x2="254" y2="815" stroke="#fafafa" stroke-width="1"/><line x1="286" y1="798" x2="286" y2="815" stroke="#c4c4c4" stroke-width="1"/><line x1="287" y1="798" x2="287" y2="815" stroke="#fafafa" stroke-width="1"/><line x1="338" y1="798" x2="338" y2="815" stroke="#c4c4c4" stroke-width="1"/><line x1="339" y1="798" x2="339" y2="815" stroke="#fafafa" stroke-width="1"/><line x1="393" y1="798" x2="393" y2="815" stroke="#c4c4c4" stroke-width="1"/><line x1="394" y1="798" x2="394" y2="815" stroke="#fafafa" stroke-width="1"/><line x1="469" y1="798" x2="469" y2="815" stroke="#c4c4c4" stroke-width="1"/><line x1="470" y1="798" x2="470" y2="815" stroke="#fafafa" stroke-width="1"/><line x1="524" y1="798" x2="524" y2="815" stroke="#c4c4c4" stroke-width="1"/><line x1="525" y1="798" x2="525" y2="815" stroke="#fafafa" stroke-width="1"/><line x1="577" y1="798" x2="577" y2="815" stroke="#c4c4c4" stroke-width="1"/><line x1="578" y1="798" x2="578" y2="815" stroke="#fafafa" stroke-width="1"/><line x1="723" y1="798" x2="723" y2="815" stroke="#c4c4c4" stroke-width="1"/><line x1="724" y1="798" x2="724" y2="815" stroke="#fafafa" stroke-width="1"/><line x1="802" y1="798" x2="802" y2="815" stroke="#c4c4c4" stroke-width="1"/><line x1="803" y1="798" x2="803" y2="815" stroke="#fafafa" stroke-width="1"/><line x1="833" y1="798" x2="833" y2="815" stroke="#c4c4c4" stroke-width="1"/><line x1="834" y1="798" x2="834" y2="815" stroke="#fafafa" stroke-width="1"/><g transform="translate(14,798)"><path d="M4 5q4-3 8 0t0 6" stroke="#777" stroke-width="1.4" fill="none"/><path d="M2 3v5h5z" fill="#777"/><path d="M1 14h8" stroke="#777" stroke-width="2"/><path d="M10 14h5" stroke="#bbb" stroke-width="1"/></g><g transform="translate(36,798)"><path d="M12 5q-4-3-8 0t0 6" stroke="#777" stroke-width="1.4" fill="none"/><path d="M14 3v5H9z" fill="#777"/><path d="M7 14h8" stroke="#777" stroke-width="2"/><path d="M1 14h5" stroke="#bbb" stroke-width="1"/></g><g transform="translate(67,798)"><path d="M8 1q-3 0-2 5l1 5h2l1-5q1-5-2-5z" fill="#8a0808"/><path d="M8 12l-2 2 2 2 2-2z" fill="#8a0808"/></g><g transform="translate(90,798)"><circle cx="6" cy="6" r="5" fill="#fff" stroke="#1a1a1a" stroke-width="1.6"/><path d="M3 6h6M6 3v6" stroke="#1a1a1a" stroke-width="1.8"/><path d="M10 10l5 5" stroke="#1a3a9a" stroke-width="2.6"/></g><g transform="translate(113,798)"><circle cx="6" cy="6" r="5" fill="#fff" stroke="#1a1a1a" stroke-width="1.6"/><path d="M3 6h6" stroke="#1a1a1a" stroke-width="1.8"/><path d="M10 10l5 5" stroke="#1a3a9a" stroke-width="2.6"/></g><g transform="translate(137,798)"><circle cx="9" cy="7" r="5" fill="none" stroke="#8c8c8c" stroke-width="1.3"/><rect x="6" y="4" width="6" height="6" fill="none" stroke="#b4b4b4"/><path d="M5 11l-4 4" stroke="#8c8c8c" stroke-width="2"/></g><g transform="translate(159,798)"><circle cx="6" cy="8" r="4" fill="none" stroke="#8c8c8c" stroke-width="1.3"/><path d="M9 11l3 3" stroke="#8c8c8c" stroke-width="2"/><path d="M10 4h5M10 4l2-2M10 4l2 2" stroke="#8c8c8c" fill="none"/></g><g transform="translate(182,798)"><circle cx="6" cy="8" r="4" fill="none" stroke="#8c8c8c" stroke-width="1.3"/><path d="M9 11l3 3" stroke="#8c8c8c" stroke-width="2"/><path d="M10 4h5M10 4l2-2M10 4l2 2" stroke="#8c8c8c" fill="none"/></g><g transform="translate(205,798)"><rect x="1" y="1" width="14" height="14" fill="#1a2a8a" stroke="#111"/><rect x="3" y="3" width="10" height="10" fill="#fff"/><path d="M4 4h2M10 4h2M4 12h2M10 12h2M4 4v2M12 4v2M4 10v2M12 10v2" stroke="#1a2a8a" stroke-width="1.3"/><rect x="6" y="6" width="4" height="4" fill="#1a2a8a"/></g><g transform="translate(228,798)"><circle cx="8" cy="9" r="6" fill="none" stroke="#8c8c8c" stroke-width="1.2"/><path d="M4 5l8 8M12 5l-8 8" stroke="#8c8c8c"/><path d="M5 1h6" stroke="#8c8c8c"/></g><g transform="translate(260,798)"><path d="M2 15V2h13M6 15V6h9" stroke="#8c8c8c" stroke-width="1.3" fill="none"/></g><g transform="translate(290,798)"><path d="M3 12h10V4M3 14h3" stroke="#8c8c8c" stroke-width="1.2" fill="none"/></g><g transform="translate(314,798)"><path d="M3 13l9-9M5 15l9-9" stroke="#8c8c8c" stroke-width="1.3"/><circle cx="4" cy="4" r="2" fill="none" stroke="#8c8c8c"/><circle cx="12" cy="12" r="2" fill="none" stroke="#8c8c8c"/></g><g transform="translate(344,798)"><rect x="1" y="5" width="14" height="6" fill="#f0f0f0" stroke="#8c8c8c" stroke-width="1.3"/><path d="M4 5v3M7 5v3M10 5v3M13 5v3" stroke="#8c8c8c"/></g><g transform="translate(368,798)"><path d="M2 14L14 2M2 14l1-4M2 14l4-1M14 2l-4 1M14 2l-1 4" stroke="#8c8c8c" stroke-width="1.2" fill="none"/></g><g transform="translate(398,798)"><path d="M2 2l12 12M2 2v4M2 2h4M14 14v-3M10 14h4" stroke="#8c8c8c" stroke-width="1.3" fill="none"/><circle cx="12" cy="4" r="1.5" fill="#8c8c8c"/></g><g transform="translate(421,798)"><path d="M1 12a7 7 0 0 1 14 0z" fill="#f0f0f0" stroke="#8c8c8c" stroke-width="1.3"/><path d="M8 12l3-5" stroke="#8c8c8c"/></g><g transform="translate(445,798)"><path d="M1 14h14M1 14L13 3" stroke="#8c8c8c" stroke-width="1.3"/><path d="M6 14q0-3-2-5" stroke="#8c8c8c" fill="none"/><path d="M11 10v4" stroke="#8c8c8c"/></g><g transform="translate(475,798)"><rect x="1" y="4" width="11" height="11" fill="#eee" stroke="#8c8c8c"/><path d="M4 7h6M4 10h6M4 13h6" stroke="#8c8c8c"/><path d="M9 9l6-7" stroke="#8c8c8c" stroke-width="2"/></g><g transform="translate(498,798)"><rect x="1" y="2" width="14" height="12" fill="#fff" stroke="#444" stroke-width="1.3"/><path d="M1 6h14M1 10h14M6 2v12M11 2v12" stroke="#555"/></g><g transform="translate(529,798)"><path d="M1 9l7-7h6v6l-7 7z" fill="#fff" stroke="#1a1a1a" stroke-width="1.5"/><circle cx="11" cy="5" r="1.3" fill="#1a1a1a"/></g><g transform="translate(553,798)"><rect x="2" y="2" width="9" height="9" fill="#f0f0f0" stroke="#8c8c8c" stroke-width="1.2"/><rect x="5" y="5" width="9" height="9" fill="#f8f8f8" stroke="#8c8c8c" stroke-width="1.2"/></g><g transform="translate(729,798)"><circle cx="3" cy="11" r="1.2" fill="#555"/><path d="M8 6h5M10.5 3.5v5" stroke="#666"/></g><g transform="translate(752,798)"><circle cx="3" cy="11" r="1.2" fill="#555"/><path d="M8 6h5" stroke="#666"/></g><g transform="translate(776,798)"><path d="M4 6q0-5 4-5t4 5v5q0 4-4 4t-4-4z" fill="#fff" stroke="#8c8c8c" stroke-width="1.2"/><path d="M4 6h8M8 1v5" stroke="#8c8c8c"/></g><g transform="translate(807,798)"><path d="M8 1v14M1 8h14" stroke="#8c8c8c" stroke-width="1.2"/><path d="M3 3l10 10M13 3L3 13" stroke="#bbb"/></g><g transform="translate(838,798)"><path d="M4 1v14M8 1v14M12 1v14M1 4h14M1 8h14M1 12h14" stroke="#8c8c8c" stroke-width="1.2"/></g><g transform="translate(861,798)"><circle cx="4" cy="10" r="2.5" fill="none" stroke="#8c8c8c"/><circle cx="12" cy="10" r="2.5" fill="none" stroke="#8c8c8c"/><circle cx="8" cy="4" r="2.5" fill="none" stroke="#8c8c8c"/><path d="M8 6v8M5 12h6" stroke="#8c8c8c"/></g><g transform="translate(884,798)"><rect x="2" y="2" width="12" height="12" fill="none" stroke="#8c8c8c"/><path d="M3 9l6-6M4 12l8-8M7 13l6-6" stroke="#8c8c8c"/></g><g transform="translate(907,798)"><path d="M2 15V2h13M6 15V6h9" stroke="#8c8c8c" stroke-width="1.3" fill="none"/></g><g transform="translate(930,798)"><path d="M1 8h14" stroke="#8c8c8c" stroke-width="1.3"/><path d="M11 6v4" stroke="#8c8c8c"/></g><g transform="translate(953,798)"><rect x="1" y="6" width="14" height="5" fill="#ddd" stroke="#8c8c8c" stroke-width="1.2"/><path d="M3 8h10" stroke="#777" stroke-width="1.5"/></g><g transform="translate(976,798)"><path d="M5 2h10l-4 12H1z" fill="none" stroke="#8c8c8c" stroke-width="1.2"/></g><g transform="translate(999,798)"><text x="1" y="10" font-size="8" fill="#8c8c8c" font-family="Liberation Sans">AB</text><path d="M1 11l5 4" stroke="#b4b4b4"/></g><g transform="translate(1022,798)"><rect x="1" y="1" width="14" height="14" fill="#eee" stroke="#8c8c8c"/><rect x="4" y="4" width="8" height="8" fill="none" stroke="#8c8c8c"/><text x="5" y="11" font-size="6" fill="#666" font-family="Liberation Sans">A</text></g><g transform="translate(1045,798)"><path d="M1 8h14M1 5v6M15 5v6" stroke="#8c8c8c" stroke-width="1.2"/><path d="M4 6v4M7 6v4M10 6v4" stroke="#b4b4b4"/></g><g transform="translate(1068,798)"><rect x="2" y="4" width="12" height="8" fill="#eee" stroke="#8c8c8c" stroke-width="1.2"/><rect x="5" y="6" width="6" height="4" fill="#bbb"/></g><g transform="translate(1091,798)"><path d="M1 8h9M11 3v10" stroke="#8c8c8c" stroke-width="1.3"/><path d="M10 8l-4-3v6z" fill="#8c8c8c"/></g><g transform="translate(1114,798)"><path d="M1 10l9-9M1 14l13-13M4 15l11-11M9 15l6-6" stroke="#b4b4b4" stroke-width="1.3"/></g><g transform="translate(1137,798)"><rect x="1" y="1" width="14" height="14" fill="#f4f4f4" stroke="#8c8c8c"/><rect x="4" y="4" width="8" height="8" fill="none" stroke="#8c8c8c" stroke-width="1.2"/><text x="5" y="11" font-size="6" fill="#555" font-family="Liberation Sans">R</text></g><g transform="translate(1160,798)"><path d="M3 13q0-8 5-10t5 10" stroke="#8c8c8c" fill="none" stroke-dasharray="2 1"/><circle cx="3" cy="13" r="1.6" fill="#8c8c8c"/><circle cx="13" cy="13" r="1.6" fill="#8c8c8c"/><circle cx="12" cy="3" r="1.6" fill="#8c8c8c"/></g><g transform="translate(583,798)"><rect x="1.5" y="1.5" width="13" height="13" fill="none" stroke="#8a8a8a" stroke-width="1.3"/><text x="8" y="12.5" text-anchor="middle" font-size="11" fill="#8a8a8a" font-family="Liberation Sans">A</text></g><g transform="translate(606,798)"><rect x="1.5" y="1.5" width="13" height="13" fill="none" stroke="#8a8a8a" stroke-width="1.3"/><text x="8" y="12.5" text-anchor="middle" font-size="11" fill="#8a8a8a" font-family="Liberation Sans">S</text></g><g transform="translate(629,798)"><rect x="1.5" y="1.5" width="13" height="13" fill="none" stroke="#8a8a8a" stroke-width="1.3"/><text x="8" y="12.5" text-anchor="middle" font-size="11" fill="#8a8a8a" font-family="Liberation Sans">M</text></g><g transform="translate(652,798)"><rect x="1.5" y="1.5" width="13" height="13" fill="none" stroke="#8a8a8a" stroke-width="1.3"/><text x="8" y="12.5" text-anchor="middle" font-size="11" fill="#8a8a8a" font-family="Liberation Sans">W</text></g><g transform="translate(675,798)"><rect x="1.5" y="1.5" width="13" height="13" fill="none" stroke="#8a8a8a" stroke-width="1.3"/><text x="8" y="12.5" text-anchor="middle" font-size="11" fill="#8a8a8a" font-family="Liberation Sans">D</text></g><g transform="translate(698,798)"><rect x="1.5" y="1.5" width="13" height="13" fill="none" stroke="#8a8a8a" stroke-width="1.3"/><text x="8" y="12.5" text-anchor="middle" font-size="11" fill="#8a8a8a" font-family="Liberation Sans">C</text></g><g transform="translate(7,26)"><path d="M1 5h10v10H1zM5 1h10v10H5zM1 5l4-4M11 5l4-4M1 15l4-4M11 15l4-4" fill="none" stroke="#d02020" stroke-width="1.2"/><path d="M3 9h6M6 6v6" stroke="#d02020"/></g><rect x="1443.5" y="27.5" width="16" height="15" fill="#fff" stroke="#e8e8e8"/><rect x="1462.5" y="27.5" width="16" height="15" fill="#fff" stroke="#e8e8e8"/><rect x="1481.5" y="27.5" width="17" height="15" fill="#fff" stroke="#e8e8e8"/><path d="M1448 37h6" stroke="#444" stroke-width="1.6"/><path d="M1468 32h6v5M1466 34h6v5h-6z" fill="none" stroke="#444" stroke-width="1.2"/><path d="M1486 31l7 7M1493 31l-7 7" stroke="#444" stroke-width="1.8"/></svg>
</body></html>
